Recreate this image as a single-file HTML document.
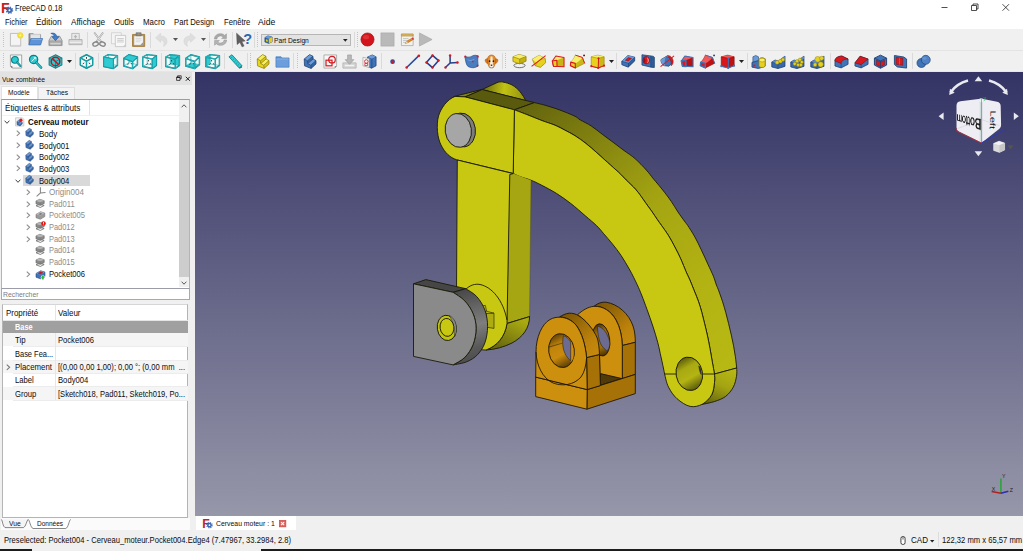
<!DOCTYPE html><html lang="fr"><head><meta charset="utf-8"><title>FreeCAD 0.18</title><style>
html,body{margin:0;padding:0}
body{width:1023px;height:551px;overflow:hidden;position:relative;background:#f0f0f0;font-family:"Liberation Sans", sans-serif;color:#0c0c0c}
.abs{position:absolute}
.tx{position:absolute;white-space:pre;line-height:12px;height:12px;transform-origin:0 50%;display:block}
svg{position:absolute;overflow:visible}
</style></head><body>
<div class="abs" id="titlebar" style="left:0;top:0;width:1023px;height:15px;background:#fff"></div>
<div class="abs" id="menubar" style="left:0;top:15px;width:1023px;height:14px;background:#fff"></div>
<div class="abs" id="toolbars" style="left:0;top:29px;width:1023px;height:43px;background:#f0f0f0"></div>
<div class="abs" style="left:0;top:50px;width:1023px;height:1px;background:#e3e3e3"></div>
<div class="abs" style="left:0;top:71px;width:1023px;height:1px;background:#e6e6e6"></div>
<div class="abs" id="view3d" style="left:195px;top:72px;width:828px;height:443.6px;background:linear-gradient(#333365,#9797aa)"></div>
<div class="abs" style="left:0;top:72px;width:192px;height:13px;background:#e2e2e2"></div>
<div class="abs" style="left:1px;top:85.6px;width:37.4px;height:13.4px;background:#fff;border:1px solid #e2e2e2;border-bottom:none;box-sizing:border-box"></div>
<div class="abs" style="left:38.4px;top:87.2px;width:36.6px;height:11.8px;background:#f4f4f4;border:1px solid #dedede;border-bottom:none;box-sizing:border-box"></div>
<div class="abs" id="tree" style="left:1px;top:99px;width:189px;height:189.8px;background:#fff;border:1px solid #b4b4b4;border-top-color:#9c9c9c;box-sizing:border-box"></div>
<div class="abs" style="left:89px;top:100px;width:1px;height:14.5px;background:#e2e2e2"></div>
<div class="abs" style="left:179.2px;top:100px;width:10px;height:187px;background:#f0f0f0"></div>
<div class="abs" style="left:179.2px;top:122px;width:10px;height:154.6px;background:#cdcdcd"></div>
<div class="abs" style="left:23.4px;top:174.7px;width:66.2px;height:11.2px;background:#d9d9d9"></div>
<div class="abs" style="left:1px;top:288.2px;width:189px;height:11.6px;background:#fff;border:1px solid #a9a9a9;border-top-color:#9a9ca8;box-sizing:border-box"></div>
<div class="abs" id="props" style="left:2px;top:303.6px;width:186.4px;height:214.2px;background:#fff;border:1px solid #b4b4b4;border-top-color:#d6d6d6;box-sizing:border-box"></div>
<div class="abs" style="left:3px;top:320.4px;width:185px;height:12.5px;background:#a0a0a0"></div>
<div class="abs" style="left:3px;top:333.0px;width:185px;height:13.4px;background:#f5f5f5"></div>
<div class="abs" style="left:3px;top:359.8px;width:185px;height:13.4px;background:#f5f5f5"></div>
<div class="abs" style="left:3px;top:386.6px;width:185px;height:13.4px;background:#f5f5f5"></div>
<div class="abs" style="left:13px;top:346.2px;width:175px;height:1px;background:#ececec"></div>
<div class="abs" style="left:13px;top:359.6px;width:175px;height:1px;background:#ececec"></div>
<div class="abs" style="left:13px;top:373.0px;width:175px;height:1px;background:#ececec"></div>
<div class="abs" style="left:13px;top:386.4px;width:175px;height:1px;background:#ececec"></div>
<div class="abs" style="left:13px;top:399.8px;width:175px;height:1px;background:#ececec"></div>
<div class="abs" style="left:54.6px;top:333px;width:1px;height:67px;background:#e6e6e6"></div>
<div class="abs" style="left:54.6px;top:304.6px;width:1px;height:15.6px;background:#e5e5e5"></div>
<div class="abs" style="left:3px;top:320px;width:185px;height:1px;background:#e5e5e5"></div>
<div class="abs" style="left:1px;top:518px;width:189px;height:11.6px;background:#fbfbfb"></div>
<svg style="left:0;top:517px" width="100" height="14" viewBox="0 0 100 14"><path d="M1.4 2.4C2.6 3.4 2.6 9.6 5 10.6L23.6 10.6C26 9.6 26.6 3.4 28.2 2.4" fill="#f4f4f4" stroke="#555" stroke-width="0.7"/><path d="M28.2 2.4C29.8 3.4 30.4 10.5 33 11.5L65.8 11.5C68.4 10.5 69 3.4 70.6 2.4" fill="#fff" stroke="#555" stroke-width="0.7"/></svg>
<div class="abs" style="left:195.6px;top:515.6px;width:100.6px;height:14.8px;background:#fff"></div>
<div class="abs" id="status" style="left:0;top:531px;width:1023px;height:17px;background:#f0f0f0"></div>
<div class="abs" style="left:0;top:549px;width:32px;height:2px;background:#1c1c1c"></div>
<div class="abs" style="left:261px;top:549px;width:762px;height:2px;background:#1c1c1c"></div>
<svg id="model" style="left:0;top:0" width="1023" height="551" viewBox="0 0 1023 551">
<defs>
<linearGradient id="gSide" gradientUnits="userSpaceOnUse" x1="530" y1="100" x2="735" y2="360"><stop offset="0" stop-color="#64640f"/><stop offset="0.1" stop-color="#72720f"/><stop offset="0.3" stop-color="#8e8e11"/><stop offset="0.48" stop-color="#a5a512"/><stop offset="0.75" stop-color="#b2b213"/><stop offset="1" stop-color="#b8b814"/></linearGradient>
<linearGradient id="gEnd" gradientUnits="userSpaceOnUse" x1="728" y1="368" x2="712" y2="406"><stop offset="0" stop-color="#b6b614"/><stop offset="0.45" stop-color="#a4a412"/><stop offset="1" stop-color="#64640e"/></linearGradient>
<linearGradient id="gBarEnd" gradientUnits="userSpaceOnUse" x1="520" y1="320" x2="505" y2="350"><stop offset="0" stop-color="#a9a912"/><stop offset="1" stop-color="#6a6a10"/></linearGradient>
<linearGradient id="gLugTop" gradientUnits="userSpaceOnUse" x1="455" y1="92" x2="526" y2="100"><stop offset="0" stop-color="#8c8c12"/><stop offset="0.42" stop-color="#74740f"/><stop offset="0.68" stop-color="#c2c214"/><stop offset="1" stop-color="#8e8e10"/></linearGradient>
<linearGradient id="gHole" gradientUnits="userSpaceOnUse" x1="684" y1="357" x2="696" y2="391"><stop offset="0" stop-color="#55550c"/><stop offset="0.3" stop-color="#a8a812"/><stop offset="0.6" stop-color="#b4b414"/><stop offset="1" stop-color="#4c4c0c"/></linearGradient>
<linearGradient id="gGray" gradientUnits="userSpaceOnUse" x1="462" y1="290" x2="482" y2="362"><stop offset="0" stop-color="#484848"/><stop offset="0.2" stop-color="#5e5e5e"/><stop offset="0.5" stop-color="#7e7e7e"/><stop offset="0.8" stop-color="#585858"/><stop offset="1" stop-color="#4a4a4a"/></linearGradient>
<linearGradient id="gOrTop1" gradientUnits="userSpaceOnUse" x1="563" y1="313" x2="597" y2="352"><stop offset="0" stop-color="#7a5405"/><stop offset="0.4" stop-color="#9e6d08"/><stop offset="0.75" stop-color="#bd820b"/><stop offset="1" stop-color="#c4880c"/></linearGradient>
<linearGradient id="gOrTop2" gradientUnits="userSpaceOnUse" x1="598" y1="302" x2="634" y2="340"><stop offset="0" stop-color="#7a5405"/><stop offset="0.4" stop-color="#9e6d08"/><stop offset="0.75" stop-color="#bd820b"/><stop offset="1" stop-color="#c4880c"/></linearGradient>
<linearGradient id="gOrHole" gradientUnits="userSpaceOnUse" x1="556" y1="334" x2="568" y2="368"><stop offset="0" stop-color="#5e3f05"/><stop offset="0.3" stop-color="#c0840c"/><stop offset="0.6" stop-color="#c98a0d"/><stop offset="1" stop-color="#4a3104"/></linearGradient>
<linearGradient id="gOrHole2" gradientUnits="userSpaceOnUse" x1="598" y1="324" x2="606" y2="356"><stop offset="0" stop-color="#4e3404"/><stop offset="0.25" stop-color="#9a6a08"/><stop offset="0.7" stop-color="#a06e09"/><stop offset="1" stop-color="#3e2a03"/></linearGradient>
</defs>
<g stroke="#1a1a08" stroke-width="0.9" stroke-linejoin="round">
<path d="M453.5 96.8 L457 95.7 L482.2 89.4 L496.9 82.7 C499 81.8 501 81.7 502.7 82 C506 82.6 509.5 83.6 512.1 85 C515.5 87 518.5 89.6 520.3 92 C522.6 95 524.4 97.8 525.8 100.6 L482.2 89.6 L465.2 96.9 Z" fill="url(#gLugTop)"/>
<path d="M465.2 96.9 L482.2 89.6 L534.4 102.6 L514.4 109.8 Z" fill="#5a5a0e"/>
<path d="M514.4 109.8 C516.7 110.7 523.4 113.2 528.0 115.0 C532.6 116.8 537.5 118.9 542.0 120.6 C546.5 122.3 551.2 123.6 555.0 125.2 C558.8 126.8 561.7 128.4 565.0 130.2 C568.3 131.9 571.5 133.5 575.0 135.7 C578.5 137.9 582.3 140.6 585.9 143.4 C589.5 146.2 593.2 149.5 596.8 152.7 C600.4 155.9 604.1 159.2 607.7 162.5 C611.3 165.8 615.5 169.4 618.6 172.3 C621.7 175.2 623.4 177.2 626.2 180.0 C629.0 182.8 633.0 186.4 635.4 189.1 C637.8 191.8 639.1 193.6 640.9 196.1 C642.7 198.6 644.5 201.2 646.3 203.8 C648.1 206.4 650.0 208.8 651.8 211.4 C653.6 214.0 655.6 217.0 657.2 219.4 C658.8 221.8 659.7 222.8 661.6 225.6 C663.5 228.3 666.4 232.2 668.7 235.9 C671.0 239.6 673.3 244.1 675.3 247.9 C677.3 251.7 678.9 254.8 680.7 258.8 C682.5 262.8 684.6 268.3 686.1 271.8 C687.6 275.3 688.5 276.8 689.9 280.0 C691.3 283.2 692.8 287.3 694.3 290.9 C695.8 294.5 697.3 298.2 698.6 301.8 C699.9 305.4 700.9 309.1 701.9 312.7 C702.9 316.3 703.7 319.9 704.6 323.6 C705.5 327.3 706.4 330.8 707.3 335.0 C708.2 339.2 709.2 344.2 710.0 348.6 C710.8 353.0 711.5 357.1 712.2 361.3 C713.0 365.5 714.1 371.9 714.5 374.0 L736.7 368.0 C736.5 366.1 735.9 360.5 735.4 356.8 C734.9 353.1 734.3 349.5 733.6 345.9 C732.9 342.3 732.1 338.7 731.3 335.0 C730.5 331.3 729.5 327.3 728.6 323.6 C727.7 319.9 726.8 316.3 725.8 312.7 C724.8 309.1 723.8 305.4 722.6 301.8 C721.4 298.2 719.8 293.7 718.8 290.9 C717.8 288.1 717.3 287.4 716.4 285.0 C715.5 282.6 714.8 279.7 713.4 276.2 C712.0 272.7 709.9 268.6 707.9 264.2 C705.9 259.8 703.6 254.6 701.4 250.1 C699.2 245.6 697.2 241.1 694.9 237.0 C692.6 232.9 689.5 228.2 687.8 225.6 C686.1 223.0 686.1 223.5 684.5 221.2 C682.9 218.9 680.1 215.2 677.9 211.9 C675.7 208.6 673.6 204.8 671.4 201.6 C669.2 198.4 667.0 195.5 664.9 192.8 C662.8 190.1 660.9 187.7 658.9 185.3 C656.9 182.9 655.0 180.8 652.9 178.2 C650.8 175.6 649.3 173.3 646.3 170.0 C643.3 166.7 638.7 161.8 635.0 158.6 C631.3 155.3 627.6 153.2 624.0 150.5 C620.4 147.8 616.7 145.0 613.1 142.3 C609.5 139.6 605.8 136.9 602.2 134.2 C598.6 131.5 594.9 128.4 591.3 126.0 C587.7 123.6 583.1 121.6 580.4 120.0 C577.7 118.4 577.6 117.6 575.0 116.3 C572.4 115.0 568.3 113.3 565.0 112.0 C561.7 110.7 558.3 109.4 555.0 108.3 C551.7 107.2 548.4 106.2 545.0 105.2 C541.6 104.2 536.2 103.0 534.4 102.6 Z" fill="url(#gSide)"/>
<path d="M714.5 374.0L736.7 368.0 C736.7 369.4 737.1 373.1 736.5 376.3 C735.9 379.5 735.1 383.8 733.3 387.1 C731.5 390.5 728.7 394.0 725.6 396.4 C722.5 398.8 718.6 400.1 714.8 401.4 C710.9 402.7 704.5 403.9 702.5 404.4 L702.5 404.1 C704.0 402.6 709.7 398.4 711.7 394.8 C713.7 391.2 714.0 386.0 714.5 382.5 C715.0 379.0 714.5 375.4 714.5 374.0 Z" fill="url(#gEnd)"/>
<path d="M514.4 109.8 C516.7 110.7 523.4 113.2 528.0 115.0 C532.6 116.8 537.5 118.9 542.0 120.6 C546.5 122.3 551.2 123.6 555.0 125.2 C558.8 126.8 561.7 128.4 565.0 130.2 C568.3 131.9 571.5 133.5 575.0 135.7 C578.5 137.9 582.3 140.6 585.9 143.4 C589.5 146.2 593.2 149.5 596.8 152.7 C600.4 155.9 604.1 159.2 607.7 162.5 C611.3 165.8 615.5 169.4 618.6 172.3 C621.7 175.2 623.4 177.2 626.2 180.0 C629.0 182.8 633.0 186.4 635.4 189.1 C637.8 191.8 639.1 193.6 640.9 196.1 C642.7 198.6 644.5 201.2 646.3 203.8 C648.1 206.4 650.0 208.8 651.8 211.4 C653.6 214.0 655.6 217.0 657.2 219.4 C658.8 221.8 659.7 222.8 661.6 225.6 C663.5 228.3 666.4 232.2 668.7 235.9 C671.0 239.6 673.3 244.1 675.3 247.9 C677.3 251.7 678.9 254.8 680.7 258.8 C682.5 262.8 684.6 268.3 686.1 271.8 C687.6 275.3 688.5 276.8 689.9 280.0 C691.3 283.2 692.8 287.3 694.3 290.9 C695.8 294.5 697.3 298.2 698.6 301.8 C699.9 305.4 700.9 309.1 701.9 312.7 C702.9 316.3 703.7 319.9 704.6 323.6 C705.5 327.3 706.4 330.8 707.3 335.0 C708.2 339.2 709.2 344.2 710.0 348.6 C710.8 353.0 711.5 357.1 712.2 361.3 C713.0 365.5 714.1 371.9 714.5 374.0 C714.5 375.4 715.0 379.0 714.5 382.5 C714.0 386.0 713.7 391.2 711.7 394.8 C709.7 398.4 706.1 402.2 702.5 404.1 C698.9 406.0 694.4 407.3 690.1 406.4 C685.9 405.5 680.6 401.9 677.0 398.7 C673.4 395.5 670.6 391.2 668.5 387.1 C666.4 383.0 665.2 376.2 664.6 374.0 C664.4 373.0 664.0 370.8 663.4 368.0 C662.8 365.2 662.0 361.3 661.0 357.0 C660.0 352.7 659.1 347.5 657.7 342.3 C656.3 337.1 654.6 331.4 652.8 326.0 C651.0 320.6 649.0 314.9 647.1 309.7 C645.2 304.5 643.3 299.2 641.6 295.0 C639.9 290.8 639.1 288.7 637.1 284.5 C635.1 280.3 632.5 274.8 629.8 270.0 C627.1 265.2 624.0 259.9 621.1 255.5 C618.2 251.2 615.3 247.5 612.4 243.9 C609.5 240.3 606.4 236.8 603.7 233.7 C601.1 230.6 599.6 228.6 596.5 225.6 C593.4 222.6 589.6 219.5 585.3 215.8 C581.0 212.1 575.6 207.2 570.8 203.5 C566.0 199.8 561.1 196.3 556.3 193.3 C551.5 190.3 546.0 187.5 541.8 185.3 C537.6 183.1 534.5 181.6 530.9 180.2 C527.3 178.8 523.0 177.7 520.0 176.6 C517.0 175.5 514.3 173.9 513.2 173.4 Z" fill="#c8c812"/>
<path d="M664.6 374 L676.5 374 M703 374 L714.5 374" fill="none"/>
<ellipse cx="689.3" cy="373.8" rx="13.2" ry="16.8" transform="rotate(-10 689.3 373.8)" fill="url(#gHole)"/>
<path d="M698.8 365.8 C700.8 368 701.6 371.5 701.2 374.6 C699.8 372.5 699 369 698.8 365.8 Z" fill="#33335a" stroke-width="0.4"/>
<path d="M465.2 96.9 L455 96.4 C447 99.5 441 108 438.5 116 C436 126 437.5 138 441 145 C445 153 450 157.5 456.7 159.8 L513.2 173.4 L514.4 109.8 Z" fill="#c8c812"/>
<path d="M509.8 173 L513.2 173.4 L531 180.2 L529.6 316.6 L507.4 323.3 Z" fill="#a6a612" stroke="none"/>
<path d="M529.6 316.6 L507.4 323.3" fill="none"/>
<path d="M531 180.2 L529.6 316.6" fill="none" stroke="#4a4a20" stroke-width="0.4"/>
<path d="M529.6 316.6 C529.4 328 523 337 512 343 C504 347 495 349.5 486 350 C497 346 505 337 507 323.5 Z" fill="url(#gBarEnd)"/>
<path d="M457.3 160 L513.2 173.6 L509.8 174.5 L507 323.5 C505 337 497 346 486 350 C470 350 458 340 456.3 325 Z" fill="#c8c812"/>
<path d="M465.3 289.8 C470 285 475 283.6 480 284.5 C492 287 503 300 507 320" fill="none"/>
<path d="M481.4 306 L485.4 305.4 L486.6 311.4 L482.4 312.2 Z" fill="#b6b612" stroke-width="0.6"/>
<path d="M482.4 312.2 L486.6 311.2 L494 313.2 L489.6 314.2 Z" fill="#c6c612" stroke-width="0.6"/>
<path d="M486.4 313.4 L494 313.2 L494 328.4 L486.4 327.2 Z" fill="#aeac10" stroke-width="0.6"/>
<path d="M413.5 283.8 L425.9 279.6 L465.8 288.7 L453.1 292.3 Z" fill="#464646"/>
<path d="M465.8 288.7 C467.6 290.0 473.5 292.9 476.7 296.5 C479.9 300.1 483.1 305.1 484.9 310.1 C486.7 315.1 487.6 320.9 487.6 326.4 C487.6 331.8 486.6 338.1 484.9 342.8 C483.2 347.5 480.6 351.4 477.6 354.6 C474.6 357.8 470.8 360.1 466.7 361.8 C462.6 363.5 455.4 364.4 453.1 364.9 L453.1 364.9 C455.1 363.6 461.6 360.7 464.9 357.3 C468.2 353.9 471.2 349.4 473.1 344.6 C475.0 339.8 476.1 333.5 476.1 328.3 C476.1 323.1 475.0 318.2 473.1 313.7 C471.2 309.1 468.2 304.6 464.9 301.0 C461.6 297.4 455.1 293.8 453.1 292.3 Z" fill="url(#gGray)"/>
<path d="M413.5 283.8 L453.1 292.3 C455.1 293.8 461.6 297.4 464.9 301.0 C468.2 304.6 471.2 309.1 473.1 313.7 C475.0 318.2 476.1 323.1 476.1 328.3 C476.1 333.5 475.0 339.8 473.1 344.6 C471.2 349.4 468.2 353.9 464.9 357.3 C461.6 360.7 455.1 363.6 453.1 364.9 L413.5 356.4 Z" fill="#8a8a8a"/>
<ellipse cx="446.8" cy="327.9" rx="9.5" ry="12.7" transform="rotate(-8 446.8 327.9)" fill="#c2c212"/>
<path d="M449.5 315.6 C453.5 317.5 456 322 456.4 327.5 C456.6 331 456 334 454.6 336.6 C454.4 329 453 321.5 449.5 315.6 Z" fill="#8a8a8a" stroke-width="0.4"/>
<ellipse cx="447" cy="327.4" rx="6.9" ry="9" transform="rotate(-8 447 327.4)" fill="#c8c812"/>
<ellipse cx="462.2" cy="130" rx="13.2" ry="17" transform="rotate(-8 462.2 130)" fill="#7c7c7c"/>
<ellipse cx="458.3" cy="130.4" rx="13.1" ry="17" transform="rotate(-8 458.3 130.4)" fill="#a6a6a6"/>
</g>
<g stroke="#1f1604" stroke-width="0.9" stroke-linejoin="round">
<path d="M594 306.3 C598 303 602 301.8 606 302.2 C618 304 629 314 633 326 C634.8 331 635.3 337 635.3 342.3 L622.3 345.5 C622 336 620 327 616 320 C611 311 603 306 594 306.3 Z" fill="url(#gOrTop2)"/>
<path d="M622.3 345.5 L635.3 342.3 L635.3 374.4 L622.3 378.6 Z" fill="#a67208"/>
<path d="M577.6 314.8 C582 310.6 588 306.8 594 306.3 C603 306 611 311 616 320 C620 327 622 336 622.3 345.5 L622.3 379 L600 384 L599.5 355 C598 340 592 324 577.6 314.8 Z" fill="#cd8f0e"/>
<ellipse cx="601.1" cy="339.9" rx="8.6" ry="16.2" transform="rotate(-7 601.1 339.9)" fill="url(#gOrHole2)"/>
<path d="M597.3 326.1 C599.5 326.6 601.5 327.8 603 329.1 C605 331 606.5 333.2 607.5 335.7 C608.6 337.6 609.4 339.8 609.7 342 C610 344.4 609.6 346.6 608.8 348.4 C608.4 349.4 607.8 350.3 606.9 350.9 C605 349.6 603.2 347.8 601.8 345.8 C600.2 343.2 599.2 340 598.6 336.9 C597.9 333.4 597.5 329.8 597.3 326.1 Z" fill="#6c6c93" stroke-width="0.5"/>
<path d="M600.4 373.6 L622 378.6 L600.4 385.2 Z" fill="#503a0a"/>
<path d="M587.2 389.6 L635.3 374.4 L635.3 393.6 L586.9 409.2 Z" fill="#a67208"/>
<path d="M535.7 377.1 L587.2 389.6 L586.9 409.2 L535.7 396.6 Z" fill="#cd8f0e"/>
<path d="M586.6 357.5 L599.5 354.5 L600.4 385.6 L587.2 389.6 Z" fill="#a67208"/>
<path d="M559.7 316.8 C562 315.4 565.5 313.6 569.1 313.2 C572.5 313 575.8 314 578.4 315.6 C582.5 318 586 321.5 589 325 C592.5 329.2 595.4 333.6 597.2 337.9 C598.6 342 599.2 348 599.5 354.5 L586.6 357.5 C585.4 345 582 333 576 325 C571.5 320 566 317.5 559.7 316.8 Z" fill="url(#gOrTop1)"/>
<path d="M536 352 C536 337 542 324 550 319.5 C553 317.8 557 317 560.3 317.2 C566 317.5 571.5 320 576 325 C582 333 585.4 345 586.6 357.5 L587.2 389.6 L535.7 377.1 Z" fill="#cd8f0e"/>
<path d="M536 352 C536.5 366 543 378 552 382.5 C562 387 574 385 581 377 C584.6 372 586.2 365 586.6 357.5" fill="none"/>
<ellipse cx="561.5" cy="350.6" rx="12.8" ry="17" transform="rotate(-8 561.5 350.6)" fill="url(#gOrHole)"/>
<path d="M570.7 341.5 C573.2 346 574.2 352 573.4 357.5 C572.8 359.5 572 361 570.7 362 Z" fill="#cf8f0e" stroke="none"/>
<path d="M563.4 335.7 C566.5 336.6 569 339 570.7 342 L570.7 360.6 C567.5 358.5 564.5 354 563.2 348 C562.4 344 562.6 339.5 563.4 335.7 Z" fill="#6c6c93" stroke-width="0.5"/>
<path d="M548.7 347.2 L562.4 343.1" fill="none" stroke-width="0.5"/>
</g>
<g>
<path d="M974.6 81.2L978.4 76.2L982.2 81.2Z" fill="#e9e9f0"/>
<path d="M974.6 151.2L978.4 156.2L982.2 151.2Z" fill="#e9e9f0"/>
<path d="M943.6 112.4L938.6 116.2L943.6 120Z" fill="#e9e9f0"/>
<path d="M1013.8 112.4L1018.8 116.2L1013.8 120Z" fill="#e9e9f0"/>
<path d="M950.5 92.5C955 86 961 82.5 968 80.6" fill="none" stroke="#e9e9f0" stroke-width="2.6"/><path d="M949.2 95L950 88.8L954.6 92.8Z" fill="#e9e9f0"/>
<path d="M1006.5 92.5C1002 86 996 82.5 989 80.6" fill="none" stroke="#e9e9f0" stroke-width="2.6"/><path d="M1007.8 95L1007 88.8L1002.4 92.8Z" fill="#e9e9f0"/>
<path d="M961 105.6L981.1 103.2L996.2 106.2L996.6 125.2L981.1 137.6L961 127.4Z" fill="#f7f7fb" stroke="#f7f7fb" stroke-width="9" stroke-linejoin="round" opacity="0.95"/>
<path d="M981.2 100V141.5" stroke="#dcdce8" stroke-width="3.4" opacity="0.8"/>
<circle cx="981.2" cy="100.6" r="2.2" fill="#fafafc" stroke="#d4d4e0" stroke-width="0.5"/>
<path d="M958 128.5L981 119.5L999.5 125.5" fill="none" stroke="#cfcfda" stroke-width="0.6"/>
<text transform="translate(990.4 110.6) rotate(92)" font-family="Liberation Sans, sans-serif" font-size="7.6" fill="#151515" textLength="18.4" lengthAdjust="spacingAndGlyphs">Left</text>
<path d="M981.4 98.4V143" stroke="#22c52a" stroke-width="0.8"/>
<path d="M956.4 131L981.4 143" stroke="#c92a2a" stroke-width="0.8"/>
<path d="M981.4 143L1003 130.6" stroke="#2a36c9" stroke-width="0.8"/>
<text x="983.6" y="100.4" font-family="Liberation Sans, sans-serif" font-size="5" fill="#22c52a">y</text>
<text x="1002.8" y="131.6" font-family="Liberation Sans, sans-serif" font-size="5.4" fill="#2a36c9">z</text>
<text x="955" y="131.2" font-family="Liberation Sans, sans-serif" font-size="4.6" fill="#c92a2a">x</text>
<path d="M993.6 143.4L999 141.2L1004.6 143V150L999.4 152.4L993.6 150.4Z" fill="#d9d9d9" stroke="#f5f5f5" stroke-width="0.5"/><path d="M993.6 143.4L999 141.2L1004.6 143L999.4 145.2Z" fill="#f2f2f2"/><path d="M999.4 145.2V152.4L1004.6 150V143Z" fill="#c6c6c6"/>
<path d="M1007.6 145.6H1013.6L1010.6 149.2Z" fill="#555"/>
<path d="M1000.9 478.4V493.2" stroke="#25a535" stroke-width="1.5"/>
<path d="M991.6 491.4L1000.9 493.2" stroke="#b51f1f" stroke-width="1.5"/>
<path d="M1000.9 493.2L1008.4 491.2" stroke="#2a2fb0" stroke-width="1.5"/>
<text x="1002" y="478.2" font-family="Liberation Sans, sans-serif" font-size="5.2" fill="#222">Y</text>
<text x="991.8" y="491" font-family="Liberation Sans, sans-serif" font-size="5.2" fill="#222">X</text>
<text x="1009.8" y="491.6" font-family="Liberation Sans, sans-serif" font-size="5.2" fill="#222">Z</text>
</g>
</svg>
<svg style="left:9.2px;top:32.4px" width="15.0" height="15.0" viewBox="0 0 16 16"><path d="M1.5 1.5H12.5V15H1.5Z" fill="#f4f4f4" stroke="#b5b5b5" stroke-width="0.9"/><path d="M2.5 14.3H12" stroke="#d0d0d0" stroke-width="0.8"/><circle cx="12" cy="3.6" r="3" fill="#f4e23a" stroke="#e9d420" stroke-width="0.6"/><circle cx="12" cy="3.6" r="1" fill="#fbf6a8"/></svg>
<svg style="left:28.3px;top:32.4px" width="15.0" height="15.0" viewBox="0 0 16 16"><path d="M1 1.8H5.6L6.6 2.8H13.4V12.6H1Z" fill="#8e8e8e" stroke="#747474" stroke-width="0.7"/><path d="M2.6 2.4H13V10H2.6Z" fill="#f0f0f0" stroke="#b4b4b4" stroke-width="0.5"/><path d="M3.4 4H12.2M3.4 5.4H12.2" stroke="#cfcfcf" stroke-width="0.6"/><path d="M3 7H15.6L13.4 13.8H0.8Z" fill="#5e93d8" stroke="#3c70b2" stroke-width="0.8"/><path d="M3.6 7.8H14.6" stroke="#9cc0ee" stroke-width="0.8"/></svg>
<svg style="left:48.0px;top:32.4px" width="15.0" height="15.0" viewBox="0 0 16 16"><path d="M1 9L3.5 4.5H12.5L15 9V14.5H1Z" fill="#c9c9c9" stroke="#8a8a8a" stroke-width="0.8"/><path d="M1.5 9.5H14.5V14H1.5Z" fill="#b0b0b0" stroke="#8a8a8a" stroke-width="0.6"/><path d="M2.5 12.6H13.5" stroke="#e8e8e8" stroke-width="0.9"/><path d="M3 1.5C6.5 0.5 9 2 9.2 5H11.8L8 9.2L4.2 5H6.6C6.5 3 5 1.8 3 1.5Z" fill="#3f7fd0" stroke="#2a5a9c" stroke-width="0.7"/></svg>
<svg style="left:68.0px;top:32.4px" width="15.0" height="15.0" viewBox="0 0 16 16"><path d="M4 1.5H12V8H4Z" fill="#e9e9e9" stroke="#ababab" stroke-width="0.8"/><path d="M8 3L10 5.3H8.8V7H7.2V5.3H6Z" fill="#b5b5b5"/><path d="M1 8H15V13.5H1Z" fill="#d6d6d6" stroke="#a5a5a5" stroke-width="0.8"/><path d="M1.5 11H14.5" stroke="#f5f5f5" stroke-width="1"/><path d="M1.5 13H14.5" stroke="#bcbcbc" stroke-width="0.8"/></svg>
<svg style="left:91.5px;top:32.4px" width="15.0" height="15.0" viewBox="0 0 16 16"><path d="M2.4 0.6L10.6 11.4M11.8 0.6L4 11.4" stroke="#9c9c9c" stroke-width="1.9" fill="none"/><path d="M2.4 0.6L10.6 11.4M11.8 0.6L4 11.4" stroke="#ececec" stroke-width="0.9" fill="none"/><ellipse cx="3.8" cy="12.8" rx="3" ry="2.2" fill="none" stroke="#848484" stroke-width="1.4" transform="rotate(-20 3.8 12.8)"/><ellipse cx="11.2" cy="12.8" rx="3" ry="2.2" fill="none" stroke="#848484" stroke-width="1.4" transform="rotate(20 11.2 12.8)"/></svg>
<svg style="left:110.5px;top:32.4px" width="15.0" height="15.0" viewBox="0 0 16 16"><path d="M0.5 0.8H11V12.6H0.5Z" fill="#f4f4f4" stroke="#cbcbcb" stroke-width="0.8"/><path d="M4.6 3.6H15.6V15.6H4.6Z" fill="#f7f7f7" stroke="#bdbdbd" stroke-width="0.8"/><path d="M6.6 7H13.6M6.6 8.8H13.6M6.6 10.6H13.6" stroke="#c2c2c2" stroke-width="0.9"/><path d="M12.6 15.6L15.6 12.8V15.6Z" fill="#c8c8c8"/></svg>
<svg style="left:131.0px;top:32.4px" width="15.0" height="15.0" viewBox="0 0 16 16"><path d="M1.6 2.6H14.6V15.4H1.6Z" fill="#b48e4a" stroke="#a07a36" stroke-width="0.9"/><path d="M3.4 4.4H12.8V13.8H3.4Z" fill="#f3f3f3" stroke="#dcdcdc" stroke-width="0.4"/><path d="M5.4 0.8H10.8V4H5.4Z" fill="#8a8a8a" stroke="#6a6a6a" stroke-width="0.6"/><path d="M7.2 2.2H9" stroke="#d89a4a" stroke-width="0.8"/><path d="M5 6.8H11.2M5 8.6H11.2M5 10.4H9.6" stroke="#cfcfcf" stroke-width="0.8"/><path d="M10 13.8L12.8 11V13.8Z" fill="#9a9a9a"/></svg>
<svg style="left:153.5px;top:32.4px" width="15.0" height="15.0" viewBox="0 0 16 16"><path d="M1.6 6.2L7 1.4V4.2C11.8 4.2 14.4 7 13.8 11.2C13.4 13.2 11.8 14.6 10 15.2C11.4 12.6 10.8 8.8 7 8.5V11Z" fill="#dedede" stroke="#d4d4d4" stroke-width="0.6"/></svg>
<svg style="left:182.0px;top:32.4px" width="15.0" height="15.0" viewBox="0 0 16 16"><path d="M14.4 6.2L9 1.4V4.2C4.2 4.2 1.6 7 2.2 11.2C2.6 13.2 4.2 14.6 6 15.2C4.6 12.6 5.2 8.8 9 8.5V11Z" fill="#dedede" stroke="#d4d4d4" stroke-width="0.6"/></svg>
<svg style="left:212.8px;top:32.4px" width="15.0" height="15.0" viewBox="0 0 16 16"><path d="M1.5 7.5C1.5 4 4.5 1.8 8 1.8C10 1.8 11.5 2.5 12.5 3.6L14.3 1.8V7H9.2L11 5.2C10.2 4.5 9.2 4.2 8 4.2C5.8 4.2 4.3 5.6 4.2 7.5Z" fill="#a9a9a9" stroke="#8e8e8e" stroke-width="0.5"/><path d="M14.5 8.5C14.5 12 11.5 14.2 8 14.2C6 14.2 4.5 13.5 3.5 12.4L1.7 14.2V9H6.8L5 10.8C5.8 11.5 6.8 11.8 8 11.8C10.2 11.8 11.7 10.4 11.8 8.5Z" fill="#b4b4b4" stroke="#8e8e8e" stroke-width="0.5"/></svg>
<svg style="left:236.0px;top:32.4px" width="15.0" height="15.0" viewBox="0 0 16 16"><path d="M0.6 1.2L9.8 9.6L6.2 10.2L8.6 15L6.4 15.8L4.2 11L1.2 13.4Z" fill="#606060" stroke="#4a4a4a" stroke-width="0.5"/><text x="7.6" y="12.6" font-family="Liberation Sans, sans-serif" font-weight="bold" font-size="15.5" fill="#2f66ad">?</text></svg>
<svg style="left:360.0px;top:32.4px" width="15.0" height="15.0" viewBox="0 0 16 16"><circle cx="8" cy="8" r="7" fill="#d4141c" stroke="#a20d12" stroke-width="0.7"/><ellipse cx="6.5" cy="5.5" rx="3.2" ry="2.2" fill="#e14a4f" opacity="0.55"/></svg>
<svg style="left:380.0px;top:32.4px" width="15.0" height="15.0" viewBox="0 0 16 16"><rect x="1" y="1" width="14" height="14" fill="#b9b9b9" stroke="#a9a9a9" stroke-width="0.7"/></svg>
<svg style="left:399.8px;top:32.4px" width="15.0" height="15.0" viewBox="0 0 16 16"><path d="M1.5 2.5H14V14.5H1.5Z" fill="#f1f1ee" stroke="#a6a6a6" stroke-width="0.8"/><path d="M1.5 2H14V4.4H1.5Z" fill="#d9b25a" stroke="#a98a3a" stroke-width="0.5"/><path d="M3.2 7H9M3.2 9H7.5M3.2 11H6.5" stroke="#b9b9b9" stroke-width="0.8"/><path d="M5.5 12.2L7.3 9.6L13.8 6L14.8 7.6L8.4 11.4Z" fill="#e68a1e" stroke="#a85a0a" stroke-width="0.5"/><path d="M5.5 12.2L7.3 9.6L8.4 11.4Z" fill="#f1d9a8"/><path d="M13 6.4L14 8" stroke="#d23030" stroke-width="1.2"/></svg>
<svg style="left:418.4px;top:32.4px" width="15.0" height="15.0" viewBox="0 0 16 16"><path d="M1.5 1L15 8L1.5 15Z" fill="#b9b9b9" stroke="#a5a5a5" stroke-width="0.7"/></svg>
<svg style="left:9.3px;top:53.6px" width="15.0" height="15.0" viewBox="0 0 16 16"><path d="M1.5 1H13.5V15H3.5L1.5 13Z" fill="#f6f6f6" stroke="#8e8e8e" stroke-width="0.8"/><path d="M1.5 13H3.5V15Z" fill="#555"/><circle cx="6.3" cy="6.2" r="3.6" fill="#2ecbd2" stroke="#0b7f86" stroke-width="1.2"/><path d="M8.6 8.8L12.2 12.8" stroke="#0b7f86" stroke-width="2.2" stroke-linecap="round"/><path d="M8.6 8.8L12.2 12.8" stroke="#2ecbd2" stroke-width="1" stroke-linecap="round"/></svg>
<svg style="left:28.3px;top:53.6px" width="15.0" height="15.0" viewBox="0 0 16 16"><circle cx="6" cy="5.8" r="4.4" fill="#2ecbd2" stroke="#0b7f86" stroke-width="1.3"/><path d="M3.8 8L8.3 3.5M8.3 3.5H6.2M8.3 3.5V5.6" stroke="#e9f9fa" stroke-width="1" fill="none"/><path d="M9 9.2L14 14.6" stroke="#0b7f86" stroke-width="2.6" stroke-linecap="round"/><path d="M9 9.2L14 14.6" stroke="#2ecbd2" stroke-width="1.2" stroke-linecap="round"/></svg>
<svg style="left:48.0px;top:53.6px" width="15.0" height="15.0" viewBox="0 0 16 16"><path d="M8 0.8L14.8 4.4V11.6L8 15.2L1.2 11.6V4.4Z" fill="#2ecbd2" stroke="#0b7f86" stroke-width="1.1"/><path d="M1.2 4.4L8 8L14.8 4.4M8 8V15.2" stroke="#0b7f86" stroke-width="0.8" fill="none"/><circle cx="8" cy="8" r="4.6" fill="none" stroke="#c8141c" stroke-width="1.6"/><path d="M4.8 4.8L11.2 11.2" stroke="#c8141c" stroke-width="1.6"/></svg>
<svg style="left:79.4px;top:53.6px" width="15.0" height="15.0" viewBox="0 0 16 16"><path d="M8 0.8L14.6 4.2V11.8L8 15.2L1.4 11.8V4.2Z" fill="#f4fbfb" stroke="#0b7f86" stroke-width="1.5" stroke-linejoin="round"/><path d="M1.4 4.2L8 7.6L14.6 4.2M8 7.6V15.2" stroke="#0b7f86" stroke-width="1.5" fill="none"/><path d="M8 0.8L14.6 4.2V11.8L8 15.2L1.4 11.8V4.2ZM1.4 4.2L8 7.6L14.6 4.2M8 7.6V15.2" stroke="#2ecbd2" stroke-width="0.5" fill="none"/><path d="M8 3.2v2M4 10.5l1.6-1M12 10.5l-1.6-1" stroke="#222" stroke-width="0.9"/></svg>
<svg style="left:102.6px;top:53.6px" width="15.0" height="15.0" viewBox="0 0 16 16"><path d="M0.8 3.2 L5.6 0.7 L15.4 1.9 L15.4 12.2 L11.0 15.4 L0.8 13.3 Z" fill="#f3fbfb"/><path d="M5.6 0.7L5.6 10.6L15.4 12.2M5.6 10.6L0.8 13.3" fill="none" stroke="#3fb3b9" stroke-width="0.8"/><path d="M7 6.4v1.5M6.2 10.2l-1.5 1.1M8.6 10.2l1.3 0.6" stroke="#2a2a2a" stroke-width="0.9" fill="none"/><path d="M0.8 3.2 L11.0 5.4 L11.0 15.4 L0.8 13.3 Z" fill="#2ecbd2"/><path d="M0.8 3.2L11.0 5.4L11.0 15.4L0.8 13.3ZM0.8 3.2L5.6 0.7L15.4 1.9L11.0 5.4M15.4 1.9L15.4 12.2L11.0 15.4" fill="none" stroke="#0b7f86" stroke-width="1.5" stroke-linejoin="round"/><path d="M0.8 3.2L11.0 5.4L11.0 15.4L0.8 13.3ZM0.8 3.2L5.6 0.7L15.4 1.9L11.0 5.4M15.4 1.9L15.4 12.2L11.0 15.4" fill="none" stroke="#2ecbd2" stroke-width="0.7" stroke-linejoin="round"/><path d="M0.8 3.2 L11.0 5.4 L11.0 15.4 L0.8 13.3 Z" fill="#2ecbd2" stroke="#0b7f86" stroke-width="0.5"/></svg>
<svg style="left:122.6px;top:53.6px" width="15.0" height="15.0" viewBox="0 0 16 16"><path d="M0.8 4.6 L6.2 0.8 L15.4 3.2 L15.4 11.4 L10.2 15.6 L0.8 12.8 Z" fill="#f3fbfb"/><path d="M6.2 0.8L6.2 9.2L15.4 11.4M6.2 9.2L0.8 12.8" fill="none" stroke="#3fb3b9" stroke-width="0.8"/><path d="M7 6.4v1.5M6.2 10.2l-1.5 1.1M8.6 10.2l1.3 0.6" stroke="#2a2a2a" stroke-width="0.9" fill="none"/><path d="M0.8 4.6 L10.2 8.0 L15.4 3.2 L6.2 0.8 Z" fill="#2ecbd2"/><path d="M0.8 4.6L10.2 8.0L10.2 15.6L0.8 12.8ZM0.8 4.6L6.2 0.8L15.4 3.2L10.2 8.0M15.4 3.2L15.4 11.4L10.2 15.6" fill="none" stroke="#0b7f86" stroke-width="1.5" stroke-linejoin="round"/><path d="M0.8 4.6L10.2 8.0L10.2 15.6L0.8 12.8ZM0.8 4.6L6.2 0.8L15.4 3.2L10.2 8.0M15.4 3.2L15.4 11.4L10.2 15.6" fill="none" stroke="#2ecbd2" stroke-width="0.7" stroke-linejoin="round"/><path d="M0.8 4.6 L10.2 8.0 L15.4 3.2 L6.2 0.8 Z" fill="#2ecbd2" stroke="#0b7f86" stroke-width="0.5"/></svg>
<svg style="left:142.3px;top:53.6px" width="15.0" height="15.0" viewBox="0 0 16 16"><path d="M0.8 3.2 L5.6 0.7 L15.4 1.9 L15.4 12.2 L11.0 15.4 L0.8 13.3 Z" fill="#f3fbfb"/><path d="M5.6 0.7L5.6 10.6L15.4 12.2M5.6 10.6L0.8 13.3" fill="none" stroke="#3fb3b9" stroke-width="0.8"/><path d="M7 6.4v1.5M6.2 10.2l-1.5 1.1M8.6 10.2l1.3 0.6" stroke="#2a2a2a" stroke-width="0.9" fill="none"/><path d="M11.0 5.4 L15.4 1.9 L15.4 12.2 L11.0 15.4 Z" fill="#2ecbd2"/><path d="M0.8 3.2L11.0 5.4L11.0 15.4L0.8 13.3ZM0.8 3.2L5.6 0.7L15.4 1.9L11.0 5.4M15.4 1.9L15.4 12.2L11.0 15.4" fill="none" stroke="#0b7f86" stroke-width="1.5" stroke-linejoin="round"/><path d="M0.8 3.2L11.0 5.4L11.0 15.4L0.8 13.3ZM0.8 3.2L5.6 0.7L15.4 1.9L11.0 5.4M15.4 1.9L15.4 12.2L11.0 15.4" fill="none" stroke="#2ecbd2" stroke-width="0.7" stroke-linejoin="round"/><path d="M11.0 5.4 L15.4 1.9 L15.4 12.2 L11.0 15.4 Z" fill="#2ecbd2" stroke="#0b7f86" stroke-width="0.5"/></svg>
<svg style="left:165.3px;top:53.6px" width="15.0" height="15.0" viewBox="0 0 16 16"><path d="M0.8 3.2 L5.6 0.7 L15.4 1.9 L15.4 12.2 L11.0 15.4 L0.8 13.3 Z" fill="#f3fbfb"/><path d="M5.6 0.7 L15.4 1.9 L15.4 12.2 L5.6 10.6 Z" fill="#2ecbd2"/><path d="M5.6 0.7L5.6 10.6L15.4 12.2M5.6 10.6L0.8 13.3" fill="none" stroke="#3fb3b9" stroke-width="0.8"/><path d="M7 6.4v1.5M6.2 10.2l-1.5 1.1M8.6 10.2l1.3 0.6" stroke="#2a2a2a" stroke-width="0.9" fill="none"/><path d="M0.8 3.2L11.0 5.4L11.0 15.4L0.8 13.3ZM0.8 3.2L5.6 0.7L15.4 1.9L11.0 5.4M15.4 1.9L15.4 12.2L11.0 15.4" fill="none" stroke="#0b7f86" stroke-width="1.5" stroke-linejoin="round"/><path d="M0.8 3.2L11.0 5.4L11.0 15.4L0.8 13.3ZM0.8 3.2L5.6 0.7L15.4 1.9L11.0 5.4M15.4 1.9L15.4 12.2L11.0 15.4" fill="none" stroke="#2ecbd2" stroke-width="0.7" stroke-linejoin="round"/></svg>
<svg style="left:185.2px;top:53.6px" width="15.0" height="15.0" viewBox="0 0 16 16"><path d="M0.8 4.6 L6.2 0.8 L15.4 3.2 L15.4 11.4 L10.2 15.6 L0.8 12.8 Z" fill="#f3fbfb"/><path d="M0.8 12.8 L10.2 15.6 L15.4 11.4 L6.2 9.2 Z" fill="#2ecbd2"/><path d="M6.2 0.8L6.2 9.2L15.4 11.4M6.2 9.2L0.8 12.8" fill="none" stroke="#3fb3b9" stroke-width="0.8"/><path d="M7 6.4v1.5M6.2 10.2l-1.5 1.1M8.6 10.2l1.3 0.6" stroke="#2a2a2a" stroke-width="0.9" fill="none"/><path d="M0.8 4.6L10.2 8.0L10.2 15.6L0.8 12.8ZM0.8 4.6L6.2 0.8L15.4 3.2L10.2 8.0M15.4 3.2L15.4 11.4L10.2 15.6" fill="none" stroke="#0b7f86" stroke-width="1.5" stroke-linejoin="round"/><path d="M0.8 4.6L10.2 8.0L10.2 15.6L0.8 12.8ZM0.8 4.6L6.2 0.8L15.4 3.2L10.2 8.0M15.4 3.2L15.4 11.4L10.2 15.6" fill="none" stroke="#2ecbd2" stroke-width="0.7" stroke-linejoin="round"/></svg>
<svg style="left:204.9px;top:53.6px" width="15.0" height="15.0" viewBox="0 0 16 16"><path d="M0.8 3.2 L5.6 0.7 L15.4 1.9 L15.4 12.2 L11.0 15.4 L0.8 13.3 Z" fill="#f3fbfb"/><path d="M0.8 3.2 L5.6 0.7 L5.6 10.6 L0.8 13.3 Z" fill="#2ecbd2"/><path d="M5.6 0.7L5.6 10.6L15.4 12.2M5.6 10.6L0.8 13.3" fill="none" stroke="#3fb3b9" stroke-width="0.8"/><path d="M7 6.4v1.5M6.2 10.2l-1.5 1.1M8.6 10.2l1.3 0.6" stroke="#2a2a2a" stroke-width="0.9" fill="none"/><path d="M0.8 3.2L11.0 5.4L11.0 15.4L0.8 13.3ZM0.8 3.2L5.6 0.7L15.4 1.9L11.0 5.4M15.4 1.9L15.4 12.2L11.0 15.4" fill="none" stroke="#0b7f86" stroke-width="1.5" stroke-linejoin="round"/><path d="M0.8 3.2L11.0 5.4L11.0 15.4L0.8 13.3ZM0.8 3.2L5.6 0.7L15.4 1.9L11.0 5.4M15.4 1.9L15.4 12.2L11.0 15.4" fill="none" stroke="#2ecbd2" stroke-width="0.7" stroke-linejoin="round"/></svg>
<svg style="left:227.9px;top:53.6px" width="15.0" height="15.0" viewBox="0 0 16 16"><path d="M1 3L4.2 0.8L15 12.6L11.8 14.8Z" fill="#2ecbd2" stroke="#0b7f86" stroke-width="0.9"/><path d="M4.6 3.2l-1.3 0.9M6.4 5.2l-1.3 0.9M8.2 7.2l-1.3 0.9M10 9.2l-1.3 0.9M11.8 11.2l-1.3 0.9" stroke="#0b7f86" stroke-width="0.6"/><path d="M11.8 14.8L15 12.6V14.5L12.2 15.8Z" fill="#0b7f86"/></svg>
<svg style="left:256.0px;top:53.6px" width="15.0" height="15.0" viewBox="0 0 16 16"><path d="M1.3 5.3 L4.8 7.2 L5.0 10.2 L8.3 12.0 L8.6 15.4 L1.6 12.6Z" fill="#e8d81c"/><path d="M7.1 0.6 L10.6 2.4 L4.8 7.2 L1.3 5.3Z" fill="#f6ee5a"/><path d="M5.0 10.2 L10.8 5.3 L13.8 7.0 L8.3 12.0Z" fill="#f6ee5a"/><path d="M4.8 7.2 L10.6 2.4 L10.8 5.3 L5.0 10.2Z" fill="#d8c414"/><path d="M8.3 12.0 L13.8 7.0 L13.9 10.6 L8.6 15.4Z" fill="#d8c414"/><path d="M7.1 0.6 L10.6 2.4 L10.8 5.3 L13.8 7.0 L13.9 10.6 L8.6 15.4 L1.6 12.6 L1.3 5.3Z M4.8 7.2L10.6 2.4M5 10.2L10.8 5.3M4.8 7.2L5 10.2L8.3 12L13.8 7M8.3 12L8.6 15.4M1.3 5.3L4.8 7.2" fill="none" stroke="#8f7d05" stroke-width="0.8" stroke-linejoin="round"/></svg>
<svg style="left:275.4px;top:53.6px" width="15.0" height="15.0" viewBox="0 0 16 16"><path d="M1 3H6.5L7.5 4.2H15V14H1Z" fill="#5a8fd4" stroke="#4577b8" stroke-width="0.7"/><path d="M1.5 5.5H14.5V13.5H1.5Z" fill="#6d9edc"/><path d="M1.5 5.3H14.5" stroke="#a5c6ef" stroke-width="0.7"/></svg>
<svg style="left:302.8px;top:53.6px" width="15.0" height="15.0" viewBox="0 0 16 16"><path d="M1.3 5.3 L4.8 7.2 L5.0 10.2 L8.3 12.0 L8.6 15.4 L1.6 12.6Z" fill="#3f74b8"/><path d="M7.1 0.6 L10.6 2.4 L4.8 7.2 L1.3 5.3Z" fill="#6b9cd9"/><path d="M5.0 10.2 L10.8 5.3 L13.8 7.0 L8.3 12.0Z" fill="#6b9cd9"/><path d="M4.8 7.2 L10.6 2.4 L10.8 5.3 L5.0 10.2Z" fill="#3466a8"/><path d="M8.3 12.0 L13.8 7.0 L13.9 10.6 L8.6 15.4Z" fill="#3466a8"/><path d="M7.1 0.6 L10.6 2.4 L10.8 5.3 L13.8 7.0 L13.9 10.6 L8.6 15.4 L1.6 12.6 L1.3 5.3Z M4.8 7.2L10.6 2.4M5 10.2L10.8 5.3M4.8 7.2L5 10.2L8.3 12L13.8 7M8.3 12L8.6 15.4M1.3 5.3L4.8 7.2" fill="none" stroke="#1d3f70" stroke-width="0.8" stroke-linejoin="round"/></svg>
<svg style="left:322.6px;top:53.6px" width="15.0" height="15.0" viewBox="0 0 16 16"><path d="M1 1H14.5V13L12.5 15H1Z" fill="#f7f7f7" stroke="#9b9b9b" stroke-width="0.8"/><path d="M12.5 15V13H14.5Z" fill="#666"/><rect x="3.2" y="6.6" width="6.4" height="6" fill="none" stroke="#d81a20" stroke-width="1.3"/><circle cx="9.6" cy="6" r="3.5" fill="none" stroke="#d81a20" stroke-width="1.3"/></svg>
<svg style="left:342.2px;top:53.6px" width="15.0" height="15.0" viewBox="0 0 16 16"><path d="M1 9.5H15V15H1Z" fill="#dcdcdc" stroke="#a9a9a9" stroke-width="0.8"/><path d="M2.5 11H13.5V13.6H2.5Z" fill="#f2f2f2" stroke="#bdbdbd" stroke-width="0.5"/><path d="M6 1H10V6H12.6L8 11L3.4 6H6Z" fill="#b8b8b8" stroke="#9a9a9a" stroke-width="0.7"/></svg>
<svg style="left:361.6px;top:53.6px" width="15.0" height="15.0" viewBox="0 0 16 16"><path d="M6 3.2L11 1L15 3V12.6L10 15.2L6 13Z" fill="#3f74b8" stroke="#1d3f70" stroke-width="0.8" stroke-linejoin="round"/><path d="M6 3.2L10.5 5L15 3M10.5 5V15" stroke="#1d3f70" stroke-width="0.7" fill="none"/><path d="M6 3.2L11 1L15 3L10.5 5Z" fill="#6a9bd8"/><path d="M1 3.5L7.6 5V14.5L1 12.6Z" fill="#f7f7f7" stroke="#9b9b9b" stroke-width="0.7"/><circle cx="4.6" cy="8" r="1.9" fill="none" stroke="#d81a20" stroke-width="0.9"/><path d="M3 10h3v2.4h-3z" fill="none" stroke="#d81a20" stroke-width="0.8"/></svg>
<svg style="left:385.0px;top:53.6px" width="15.0" height="15.0" viewBox="0 0 16 16"><circle cx="8.1" cy="8.2" r="2.5" fill="#2a4a9f"/><circle cx="8.1" cy="8.2" r="1.4" fill="#d81a20"/></svg>
<svg style="left:404.8px;top:53.6px" width="15.0" height="15.0" viewBox="0 0 16 16"><path d="M1.8 14.4L14.8 1.8" stroke="#2a4a9f" stroke-width="1.7"/><circle cx="1.8" cy="14.4" r="1.4" fill="#d81a20"/><circle cx="14.8" cy="1.8" r="1.4" fill="#d81a20"/></svg>
<svg style="left:424.6px;top:53.6px" width="15.0" height="15.0" viewBox="0 0 16 16"><path d="M1.5 9L8 1.5L14.5 7L8 14.5Z" fill="none" stroke="#24408e" stroke-width="1.7" stroke-linejoin="round"/><circle cx="1.6" cy="9" r="1.3" fill="#d81a20"/><circle cx="8" cy="1.6" r="1.3" fill="#d81a20"/><circle cx="14.4" cy="7" r="1.3" fill="#d81a20"/><circle cx="8" cy="14.4" r="1.3" fill="#d81a20"/></svg>
<svg style="left:444.0px;top:53.6px" width="15.0" height="15.0" viewBox="0 0 16 16"><path d="M6.5 1.5V9.5L1.5 14.5M6.5 9.5L14.5 9" stroke="#24408e" stroke-width="1.6" fill="none" stroke-linejoin="round"/><circle cx="6.5" cy="1.6" r="1.3" fill="#d81a20"/><circle cx="1.6" cy="14.4" r="1.3" fill="#d81a20"/><circle cx="14.4" cy="9" r="1.3" fill="#d81a20"/></svg>
<svg style="left:463.8px;top:53.6px" width="15.0" height="15.0" viewBox="0 0 16 16"><path d="M1 2.5C4 4 7 3.5 9 2C11 1 14 1 15.2 2.8C14 6 15 9 15 12.5C12 15.5 7 15 4 13C2 11 1.5 6 1 2.5Z" fill="#4a7cc0" stroke="#2b5797" stroke-width="0.8"/><path d="M4 6C6 7.5 9 7 11 5.5" stroke="#76a3de" stroke-width="1" fill="none"/><circle cx="1.4" cy="2.8" r="1.1" fill="#d81a20"/><circle cx="14.6" cy="2.4" r="1.1" fill="#d81a20"/><circle cx="14.4" cy="12.6" r="1.1" fill="#d81a20"/><circle cx="9.4" cy="8" r="0.9" fill="#d81a20"/></svg>
<svg style="left:484.0px;top:53.6px" width="15.0" height="15.0" viewBox="0 0 16 16"><path d="M1 6.5C2 4.6 4 4.6 5 6L4.6 10C3.4 10.8 1.6 9.6 1 6.5Z" fill="#d9761c" stroke="#9a4e0c" stroke-width="0.4"/><path d="M15 6.5C14 4.6 12 4.6 11 6L11.4 10C12.6 10.8 14.4 9.6 15 6.5Z" fill="#d9761c" stroke="#9a4e0c" stroke-width="0.4"/><path d="M3.6 6C3.6 3 5.6 1 8 1C10.4 1 12.4 3 12.4 6C12.4 9 11.6 12 10.4 14C9.6 15.3 6.4 15.3 5.6 14C4.4 12 3.6 9 3.6 6Z" fill="#e58a24" stroke="#9a4e0c" stroke-width="0.5"/><path d="M7 2.6H9L9.6 11.5H6.4Z" fill="#f6efe6"/><ellipse cx="8" cy="12.6" rx="2.2" ry="1.8" fill="#f6efe6"/><circle cx="5.9" cy="7.6" r="0.9" fill="#1a1a1a"/><circle cx="10.1" cy="7.6" r="0.9" fill="#1a1a1a"/><ellipse cx="8" cy="12" rx="1" ry="0.7" fill="#2a2a2a"/></svg>
<svg style="left:511.6px;top:53.6px" width="15.0" height="15.0" viewBox="0 0 16 16"><path d="M2 12.2C2 10.8 5 10 8 10C11 10 14 10.8 14 12.2C14 13.6 11 14.6 8 14.6C5 14.6 2 13.6 2 12.2Z" fill="none" stroke="#555" stroke-width="0.9"/><g transform="translate(0,-1.6) scale(1,0.92)"><path d="M1 5L7.5 2.2L15 4.6V10L8.2 13.2L1 10.4Z" fill="#e6d21e" stroke="#8f7d05" stroke-width="0.8" stroke-linejoin="round"/><path d="M1 5L7.5 2.2L15 4.6L8.2 7.6Z" fill="#f7ee6a"/><path d="M8.2 7.6V13.2L15 10V4.6Z" fill="#8f7d05" opacity="0.4"/><path d="M1 5L8.2 7.6L15 4.6M8.2 7.6V13.2" stroke="#8f7d05" stroke-width="0.7" fill="none"/></g></svg>
<svg style="left:530.8px;top:53.6px" width="15.0" height="15.0" viewBox="0 0 16 16"><path d="M1.3 5.5L8.8 1.4L15.2 4.9L15.6 9.3L10 14.3L4.4 12.4Z" fill="#e6d21e" stroke="#8f7d05" stroke-width="0.7" stroke-linejoin="round"/><path d="M1.3 5.5L8.8 1.4L15.2 4.9C11 5 8 7 6.6 9.6Z" fill="#f7ee6a"/><path d="M6.6 9.6C8 7 11 5 15.2 4.9M6.6 9.6L4.4 12.4" fill="none" stroke="#8f7d05" stroke-width="0.5"/><path d="M0.6 13.2L15.6 1.8" stroke="#d81a20" stroke-width="1.1"/></svg>
<svg style="left:550.6px;top:53.6px" width="15.0" height="15.0" viewBox="0 0 16 16"><path d="M1.4 7.4L5.2 2.2L13.9 3.7L13.9 13.7L2.7 13.1Z" fill="#e6d21e"/><path d="M1.4 7.4L5.2 2.2L13.9 3.7L6.2 6.7Z" fill="#f7ee6a"/><path d="M6.2 6.7L13.9 3.7L13.9 13.7L6.5 13.3Z" fill="#8f7d05" opacity="0.35"/><path d="M1.4 7.4L5.2 2.2L13.9 3.7L13.9 13.7L2.7 13.1Z" fill="none" stroke="#d81a20" stroke-width="1.1" stroke-linejoin="round"/><path d="M1.4 7.4L6.2 6.7L6.5 13.3L2.7 13.1Z" fill="#e6d21e" stroke="#d81a20" stroke-width="1.2" stroke-linejoin="round"/></svg>
<svg style="left:570.0px;top:53.6px" width="15.0" height="15.0" viewBox="0 0 16 16"><path d="M5.7 1.2L13.2 3.7L15.6 9.9L5.7 14.9L0.4 12.4L0.8 8.7C3 6.5 4.8 4 5.7 1.2Z" fill="#e6d21e" stroke="#8f7d05" stroke-width="0.6" stroke-linejoin="round"/><path d="M5.7 1.2L13.2 3.7C11.5 6 9 8.5 5.6 10C3.6 9.8 2 9.4 0.8 8.7C3 6.5 4.8 4 5.7 1.2Z" fill="#f7ee6a"/><path d="M5.6 10C9 8.5 11.5 6 13.2 3.7L15.6 9.9L5.7 14.9Z" fill="#8f7d05" opacity="0.3"/><path d="M5.7 1.2L13.2 3.7L15.6 9.9" fill="none" stroke="#d81a20" stroke-width="1"/><path d="M0.8 8.7L5.6 10L5.7 14.9L0.4 12.4Z" fill="#e6d21e" stroke="#d81a20" stroke-width="1.2" stroke-linejoin="round"/><circle cx="15" cy="1.5" r="1" fill="#5a0a10"/></svg>
<svg style="left:590.0px;top:53.6px" width="15.0" height="15.0" viewBox="0 0 16 16"><path d="M1.3 3L8.2 1.2L15.1 3V12.4L8.8 14.9L1.3 13Z" fill="#e6d21e" stroke="#8f7d05" stroke-width="0.6" stroke-linejoin="round"/><path d="M1.3 3L8.2 1.2L15.1 3L9.1 4.6Z" fill="#f7ee6a"/><path d="M9.1 4.6L15.1 3V12.4L8.8 14.9Z" fill="#8f7d05" opacity="0.3"/><path d="M1.3 3L9.1 4.6L15.1 3" fill="none" stroke="#8f7d05" stroke-width="0.5"/><path d="M9.1 4.6L8.8 14.9M1.3 13L8.8 14.9L15.1 12.4" fill="none" stroke="#d81a20" stroke-width="1.1"/><circle cx="9.1" cy="4.6" r="1.15" fill="#d81a20"/><circle cx="8.8" cy="14.8" r="1.15" fill="#d81a20"/><circle cx="1.4" cy="13" r="1.15" fill="#d81a20"/><circle cx="15" cy="12.4" r="1.15" fill="#d81a20"/></svg>
<svg style="left:621.2px;top:53.6px" width="15.0" height="15.0" viewBox="0 0 16 16"><path d="M0.8 7.8L7.4 1.6L14.6 3.4V7.4L7.6 14L0.9 11.4Z" fill="#3f74b8" stroke="#1d3f70" stroke-width="0.8" stroke-linejoin="round"/><path d="M0.8 7.8L7.4 1.6L14.6 3.4L8 9.8Z" fill="#6a9bd8"/><path d="M8 9.8V14L14.6 7.4V3.4Z" fill="#1d3f70" opacity="0.35"/><path d="M0.8 7.8L8 9.8L14.6 3.4M8 9.8V14" fill="none" stroke="#1d3f70" stroke-width="0.6"/><path d="M4.6 6.6L8 3.8L11.2 4.8L7.6 7.6Z" fill="#d81a20" stroke="#7c0a0a" stroke-width="0.5"/></svg>
<svg style="left:641.0px;top:53.6px" width="15.0" height="15.0" viewBox="0 0 16 16"><path d="M1 0.8L13 2.4L14.2 3.4V14.4L10.6 14L1 11.8Z" fill="#3f74b8" stroke="#1d3f70" stroke-width="0.8" stroke-linejoin="round"/><path d="M10.4 2.6V14L14.2 14.4V3.4Z" fill="#1d3f70" opacity="0.45"/><path d="M10.4 2.4V14" stroke="#1d3f70" stroke-width="0.6"/><ellipse cx="5.6" cy="6.6" rx="3.5" ry="4" fill="#d81a20" stroke="#7c0a0a" stroke-width="0.6"/><path d="M6.4 3.4C8.6 4.4 8.8 8.6 6.6 10.2C7.6 8 7.6 5.6 6.4 3.4Z" fill="#f6d0d0"/><path d="M3.6 4.2C2.4 5.6 2.4 8 3.8 9.6C5 8.6 5.2 5.6 3.6 4.2Z" fill="#9a0e14"/></svg>
<svg style="left:660.4px;top:53.6px" width="15.0" height="15.0" viewBox="0 0 16 16"><path d="M1 6L6.6 2.6L11.6 4L13.6 8.6L9.6 13L4.2 12.4C2 10.8 0.8 8.4 1 6Z" fill="#3f74b8" stroke="#1d3f70" stroke-width="0.8" stroke-linejoin="round"/><path d="M1 6L6.6 2.6C5 5 4.4 9 5.6 12.5L4.2 12.4C2 10.8 0.8 8.4 1 6Z" fill="#6a9bd8"/><path d="M7.6 1.6C10.6 1.2 13.4 3.6 14 7C14.4 9.6 13.4 11.6 11.8 12.6C12.4 10.6 12 8 10.8 5.8C10 4.2 8.8 2.6 7.6 1.6Z" fill="#d81a20" stroke="#7c0a0a" stroke-width="0.5"/><path d="M0.6 13.4L15 2" stroke="#d81a20" stroke-width="1.1"/></svg>
<svg style="left:680.4px;top:53.6px" width="15.0" height="15.0" viewBox="0 0 16 16"><path d="M1.4 7.4L5.2 2.2L13.9 3.7L13.9 13.7L2.7 13.1Z" fill="#d8161c"/><path d="M1.4 7.4L5.2 2.2L13.9 3.7L6.2 6.7Z" fill="#f05a5a"/><path d="M6.2 6.7L13.9 3.7L13.9 13.7L6.5 13.3Z" fill="#7c0a0a" opacity="0.35"/><path d="M1.4 7.4L5.2 2.2L13.9 3.7L13.9 13.7L2.7 13.1Z" fill="none" stroke="#3f74b8" stroke-width="1.1" stroke-linejoin="round"/><path d="M1.4 7.4L6.2 6.7L6.5 13.3L2.7 13.1Z" fill="#d81a20" stroke="#3f74b8" stroke-width="1.5" stroke-linejoin="round"/></svg>
<svg style="left:699.8px;top:53.6px" width="15.0" height="15.0" viewBox="0 0 16 16"><path d="M5.7 1.2L13.2 3.7L15.6 9.9L5.7 14.9L0.4 12.4L0.8 8.7C3 6.5 4.8 4 5.7 1.2Z" fill="#d8161c" stroke="#7c0a0a" stroke-width="0.6" stroke-linejoin="round"/><path d="M5.7 1.2L13.2 3.7C11.5 6 9 8.5 5.6 10C3.6 9.8 2 9.4 0.8 8.7C3 6.5 4.8 4 5.7 1.2Z" fill="#f05a5a"/><path d="M5.6 10C9 8.5 11.5 6 13.2 3.7L15.6 9.9L5.7 14.9Z" fill="#7c0a0a" opacity="0.3"/><path d="M5.7 1.2L13.2 3.7L15.6 9.9" fill="none" stroke="#3f74b8" stroke-width="1"/><path d="M0.8 8.7L5.6 10L5.7 14.9L0.4 12.4Z" fill="#d81a20" stroke="#3f74b8" stroke-width="1.5" stroke-linejoin="round"/><circle cx="15" cy="1.5" r="1" fill="#1d3f70"/></svg>
<svg style="left:719.6px;top:53.6px" width="15.0" height="15.0" viewBox="0 0 16 16"><path d="M1.3 3L8.2 1.2L15.1 3V12.4L8.8 14.9L1.3 13Z" fill="#d8161c" stroke="#7c0a0a" stroke-width="0.6" stroke-linejoin="round"/><path d="M1.3 3L8.2 1.2L15.1 3L9.1 4.6Z" fill="#f05a5a"/><path d="M9.1 4.6L15.1 3V12.4L8.8 14.9Z" fill="#7c0a0a" opacity="0.3"/><path d="M1.3 3L9.1 4.6L15.1 3" fill="none" stroke="#7c0a0a" stroke-width="0.5"/><path d="M9.1 4.6L8.8 14.9M1.3 13L8.8 14.9L15.1 12.4" fill="none" stroke="#3f74b8" stroke-width="1.1"/><circle cx="9.1" cy="4.6" r="1.15" fill="#3f74b8"/><circle cx="8.8" cy="14.8" r="1.15" fill="#3f74b8"/><circle cx="1.4" cy="13" r="1.15" fill="#3f74b8"/><circle cx="15" cy="12.4" r="1.15" fill="#3f74b8"/></svg>
<svg style="left:751.4px;top:53.6px" width="15.0" height="15.0" viewBox="0 0 16 16"><path d="M2 3L5 1.5L8 3V9L2 9.5Z" fill="#6a9bd8" stroke="#1d3f70" stroke-width="0.6"/><path d="M1 9L8 7L15 5V13L8 15.5L1 14Z" fill="#3f74b8" stroke="#1d3f70" stroke-width="0.8" stroke-linejoin="round"/><path d="M8.5 6.5C8.5 4.8 10 3.8 11.8 3.8C13.6 3.8 15 4.8 15 6.5V12.5C15 13.6 13.6 14.4 11.8 14.4C10 14.4 8.5 13.6 8.5 12.5Z" fill="#e6d21e" stroke="#8f7d05" stroke-width="0.7"/><ellipse cx="11.8" cy="6.5" rx="3.2" ry="2" fill="#f7ee6a" stroke="#8f7d05" stroke-width="0.5"/><circle cx="3.4" cy="12.3" r="1.2" fill="#d81a20"/></svg>
<svg style="left:770.8px;top:53.6px" width="15.0" height="15.0" viewBox="0 0 16 16"><path d="M0.8 8.6L4.4 6.4L8 7.6L14.9 2.2V13.2L7.4 15.5L0.8 13.8Z" fill="#3868ac" stroke="#1d3f70" stroke-width="0.8" stroke-linejoin="round"/><path d="M0.8 8.6L4.4 6.4L8 7.6L14.9 2.2V5.4L7.4 11Z" fill="#5f92d2" opacity="0.85"/><path d="M0.8 8.6L7.4 11L14.9 5.4M7.4 11V15.5" fill="none" stroke="#1d3f70" stroke-width="0.5"/><circle cx="6.6" cy="9" r="2" fill="#e6d21e" stroke="#8f7d05" stroke-width="0.5"/><circle cx="10" cy="7.6" r="2" fill="#e6d21e" stroke="#8f7d05" stroke-width="0.5"/><circle cx="12.8" cy="6" r="1.8" fill="#e6d21e" stroke="#8f7d05" stroke-width="0.5"/></svg>
<svg style="left:790.4px;top:53.6px" width="15.0" height="15.0" viewBox="0 0 16 16"><path d="M0.8 8.6L4.4 6.4L8 7.6L14.9 2.2V13.2L7.4 15.5L0.8 13.8Z" fill="#3868ac" stroke="#1d3f70" stroke-width="0.8" stroke-linejoin="round"/><path d="M0.8 8.6L4.4 6.4L8 7.6L14.9 2.2V5.4L7.4 11Z" fill="#5f92d2" opacity="0.85"/><path d="M0.8 8.6L7.4 11L14.9 5.4M7.4 11V15.5" fill="none" stroke="#1d3f70" stroke-width="0.5"/><circle cx="5" cy="10.5" r="1.7" fill="#e6d21e" stroke="#8f7d05" stroke-width="0.5"/><circle cx="7.5" cy="7.6" r="1.7" fill="#e6d21e" stroke="#8f7d05" stroke-width="0.5"/><circle cx="10.6" cy="6" r="1.7" fill="#e6d21e" stroke="#8f7d05" stroke-width="0.5"/><circle cx="12.6" cy="8.6" r="1.7" fill="#e6d21e" stroke="#8f7d05" stroke-width="0.5"/><circle cx="8.6" cy="11.6" r="1.7" fill="#e6d21e" stroke="#8f7d05" stroke-width="0.5"/><circle cx="11.6" cy="11.6" r="1.7" fill="#e6d21e" stroke="#8f7d05" stroke-width="0.5"/></svg>
<svg style="left:810.0px;top:53.6px" width="15.0" height="15.0" viewBox="0 0 16 16"><path d="M0.8 8.6L4.4 6.4L8 7.6L14.9 2.2V13.2L7.4 15.5L0.8 13.8Z" fill="#3868ac" stroke="#1d3f70" stroke-width="0.8" stroke-linejoin="round"/><path d="M0.8 8.6L4.4 6.4L8 7.6L14.9 2.2V5.4L7.4 11Z" fill="#5f92d2" opacity="0.85"/><path d="M0.8 8.6L7.4 11L14.9 5.4M7.4 11V15.5" fill="none" stroke="#1d3f70" stroke-width="0.5"/><circle cx="5.4" cy="11.4" r="2" fill="#e6d21e" stroke="#8f7d05" stroke-width="0.5"/><circle cx="8.2" cy="5.6" r="3" fill="#e6d21e" stroke="#8f7d05" stroke-width="0.5"/><circle cx="11.4" cy="11" r="2.8" fill="#e6d21e" stroke="#8f7d05" stroke-width="0.5"/><circle cx="12.4" cy="4.6" r="2.2" fill="#e6d21e" stroke="#8f7d05" stroke-width="0.5"/></svg>
<svg style="left:834.0px;top:53.6px" width="15.0" height="15.0" viewBox="0 0 16 16"><path d="M1 7.5C1 4.5 4 2.4 8.5 2.2L15 5.4V11L7.6 14.8L1 12.8Z" fill="#3f74b8" stroke="#1d3f70" stroke-width="0.8" stroke-linejoin="round"/><path d="M1 7.5C1 4.5 4 2.4 8.5 2.2L15 5.4C10.5 5.6 7.8 7 7.6 10Z" fill="#d81a20" stroke="#7c0a0a" stroke-width="0.6"/><path d="M7.6 10V14.8" stroke="#1d3f70" stroke-width="0.6"/></svg>
<svg style="left:853.6px;top:53.6px" width="15.0" height="15.0" viewBox="0 0 16 16"><path d="M1 9.5L6.5 2.4L15 5.4V11L7.6 14.8L1 12.8Z" fill="#3f74b8" stroke="#1d3f70" stroke-width="0.8" stroke-linejoin="round"/><path d="M1 9.5L6.5 2.4L15 5.4L7.6 11.4Z" fill="#d81a20" stroke="#7c0a0a" stroke-width="0.6"/><path d="M7.6 11.4V14.8" stroke="#1d3f70" stroke-width="0.6"/></svg>
<svg style="left:873.0px;top:53.6px" width="15.0" height="15.0" viewBox="0 0 16 16"><path d="M1.5 4.4L8 1.2L14.5 4.4V11.8L8 15.2L1.5 11.8Z" fill="#3f74b8" stroke="#1d3f70" stroke-width="1" stroke-linejoin="round"/><path d="M3.8 6.6L8 8.6L12.2 6.6V11.6L8 13.6L3.8 11.6Z" fill="#d81a20" stroke="#7c0a0a" stroke-width="0.5"/><path d="M1.5 4.4L8 7.4L14.5 4.4M8 7.4V15.2" stroke="#1d3f70" stroke-width="0.8" fill="none"/></svg>
<svg style="left:892.6px;top:53.6px" width="15.0" height="15.0" viewBox="0 0 16 16"><path d="M1.5 1.6L11.5 3.2L14.5 5.4V15L4.6 13.8L1.5 11.2Z" fill="#3f74b8" stroke="#1d3f70" stroke-width="0.9" stroke-linejoin="round"/><path d="M3.4 3.6L10.4 4.6V12L3.4 11Z" fill="#d81a20" stroke="#7c0a0a" stroke-width="0.5"/><path d="M7 4.2V11.4" stroke="#f05a5a" stroke-width="0.7"/></svg>
<svg style="left:916.4px;top:53.6px" width="15.0" height="15.0" viewBox="0 0 16 16"><circle cx="5.8" cy="9.6" r="4.8" fill="#3f74b8" stroke="#1d3f70" stroke-width="0.7"/><circle cx="10.4" cy="6.2" r="4.8" fill="#4d82c6" stroke="#1d3f70" stroke-width="0.7"/><ellipse cx="9" cy="4.6" rx="2.2" ry="1.6" fill="#6a9bd8" opacity="0.7"/></svg>
<div class="abs" style="left:86.8px;top:32px;width:1px;height:16px;background:#dadada"></div>
<div class="abs" style="left:149.9px;top:32px;width:1px;height:16px;background:#dadada"></div>
<div class="abs" style="left:208.9px;top:32px;width:1px;height:16px;background:#dadada"></div>
<div class="abs" style="left:231.6px;top:32px;width:1px;height:16px;background:#dadada"></div>
<div class="abs" style="left:254.0px;top:32px;width:1px;height:16px;background:#dadada"></div>
<div class="abs" style="left:353.8px;top:32px;width:1px;height:16px;background:#dadada"></div>
<div class="abs" style="left:74.9px;top:53px;width:1px;height:16px;background:#dadada"></div>
<div class="abs" style="left:98.2px;top:53px;width:1px;height:16px;background:#dadada"></div>
<div class="abs" style="left:161.0px;top:53px;width:1px;height:16px;background:#dadada"></div>
<div class="abs" style="left:223.9px;top:53px;width:1px;height:16px;background:#dadada"></div>
<div class="abs" style="left:246.5px;top:53px;width:1px;height:16px;background:#dadada"></div>
<div class="abs" style="left:292.8px;top:53px;width:1px;height:16px;background:#dadada"></div>
<div class="abs" style="left:381.0px;top:53px;width:1px;height:16px;background:#dadada"></div>
<div class="abs" style="left:502.0px;top:53px;width:1px;height:16px;background:#dadada"></div>
<div class="abs" style="left:616.4px;top:53px;width:1px;height:16px;background:#dadada"></div>
<div class="abs" style="left:747.1px;top:53px;width:1px;height:16px;background:#dadada"></div>
<div class="abs" style="left:829.5px;top:53px;width:1px;height:16px;background:#dadada"></div>
<div class="abs" style="left:911.5px;top:53px;width:1px;height:16px;background:#dadada"></div>
<div class="abs" style="left:2.5px;top:32px;width:1px;height:16px;background:repeating-linear-gradient(#c4c4c4 0 1px,transparent 1px 2px)"></div>
<div class="abs" style="left:257.2px;top:32px;width:1px;height:16px;background:repeating-linear-gradient(#c4c4c4 0 1px,transparent 1px 2px)"></div>
<div class="abs" style="left:357.0px;top:32px;width:1px;height:16px;background:repeating-linear-gradient(#c4c4c4 0 1px,transparent 1px 2px)"></div>
<div class="abs" style="left:2.5px;top:53px;width:1px;height:16px;background:repeating-linear-gradient(#c4c4c4 0 1px,transparent 1px 2px)"></div>
<div class="abs" style="left:250.3px;top:53px;width:1px;height:16px;background:repeating-linear-gradient(#c4c4c4 0 1px,transparent 1px 2px)"></div>
<div class="abs" style="left:296.9px;top:53px;width:1px;height:16px;background:repeating-linear-gradient(#c4c4c4 0 1px,transparent 1px 2px)"></div>
<div class="abs" style="left:505.2px;top:53px;width:1px;height:16px;background:repeating-linear-gradient(#c4c4c4 0 1px,transparent 1px 2px)"></div>
<svg style="left:173.1px;top:38.2px" width="5" height="3" viewBox="0 0 5 3"><path d="M0 0H5L2.5 3Z" fill="#555"/></svg>
<svg style="left:200.8px;top:38.2px" width="5" height="3" viewBox="0 0 5 3"><path d="M0 0H5L2.5 3Z" fill="#555"/></svg>
<svg style="left:66.9px;top:59.6px" width="5" height="3" viewBox="0 0 5 3"><path d="M0 0H5L2.5 3Z" fill="#222"/></svg>
<svg style="left:608.5px;top:59.6px" width="5" height="3" viewBox="0 0 5 3"><path d="M0 0H5L2.5 3Z" fill="#222"/></svg>
<svg style="left:738.5px;top:59.6px" width="5" height="3" viewBox="0 0 5 3"><path d="M0 0H5L2.5 3Z" fill="#222"/></svg>
<div class="abs" style="left:261.2px;top:34.2px;width:89.4px;height:11.4px;background:#e3e3e3;border:1px solid #b6b6b6;box-sizing:border-box"></div>
<svg style="left:264.2px;top:35.4px" width="9" height="9" viewBox="0 0 16 16"><path d="M1.5 4.5L7 1.5L14.5 3.5V12L8.5 15L1.5 12.5Z" fill="#2f5fa8" stroke="#1d3f70" stroke-width="0.9"/><path d="M1.5 4.5L7 1.5L14.5 3.5L8.5 6.6Z" fill="#6b9cd9"/><path d="M8.5 6.6V15L14.5 12V3.5Z" fill="#e4cf1c"/><path d="M3.4 7.4L6.6 8.6V12.4L3.4 11.2Z" fill="#e4cf1c"/></svg>
<svg style="left:343px;top:38.8px" width="4.6" height="2.8" viewBox="0 0 5 3"><path d="M0 0H5L2.5 3Z" fill="#222"/></svg>
<svg style="left:1.6px;top:1.8px" width="12.2" height="12.2" viewBox="0 0 16 16"><text x="-1.2" y="14.6" font-family="Liberation Sans, sans-serif" font-weight="bold" font-size="18.5" fill="#c81e1e">F</text><circle cx="9.8" cy="10.8" r="3.5" fill="#3b66b0"/><circle cx="9.8" cy="10.8" r="4.1" fill="none" stroke="#3b66b0" stroke-width="1.7" stroke-dasharray="1.7 1.52"/><circle cx="9.8" cy="10.8" r="1.3" fill="#fff"/></svg>
<svg style="left:940.0px;top:2.0px" width="12.0" height="11.0" viewBox="0 0 12 11"><path d="M1.5 5.5H7.5" stroke="#222" stroke-width="0.8"/></svg>
<svg style="left:970.0px;top:2.0px" width="12.0" height="11.0" viewBox="0 0 12 11"><path d="M1.5 3.5H6.5V8.5H1.5Z M3 3.5V2H8V7H6.5" fill="none" stroke="#222" stroke-width="0.8"/></svg>
<svg style="left:1001.0px;top:2.0px" width="12.0" height="11.0" viewBox="0 0 12 11"><path d="M1.5 2.2L8 8.7M8 2.2L1.5 8.7" stroke="#222" stroke-width="0.8"/></svg>
<svg style="left:175.6px;top:75.4px" width="6.0" height="6.0" viewBox="0 0 6 6"><path d="M0.6 2.2H4V5.4H0.6Z M1.6 2.2V0.8H5.2V3.8H4" fill="none" stroke="#222" stroke-width="0.8"/><path d="M0.6 2.4H4" stroke="#222" stroke-width="1.2"/></svg>
<svg style="left:184.6px;top:75.8px" width="6.0" height="6.0" viewBox="0 0 6 6"><path d="M0.8 0.8L4.8 4.8M4.8 0.8L0.8 4.8" stroke="#222" stroke-width="1"/></svg>
<svg style="left:3.7px;top:119.9px" width="6.0" height="4.0" viewBox="0 0 6 4"><path d="M0.6 0.7L3 3.3L5.4 0.7" fill="none" stroke="#3a3a3a" stroke-width="0.95"/></svg>
<svg style="left:15.0px;top:117.4px" width="9.4" height="9.8" viewBox="0 0 16 16"><path d="M1 1H12.5L15 3.5V15H1Z" fill="#f3f3f3" stroke="#a9a9a9" stroke-width="0.9"/><g transform="translate(2.2,3.6) scale(0.74)"><path d="M1.3 5.3 L4.8 7.2 L5.0 10.2 L8.3 12.0 L8.6 15.4 L1.6 12.6Z" fill="#3f74b8"/><path d="M7.1 0.6 L10.6 2.4 L4.8 7.2 L1.3 5.3Z" fill="#6b9cd9"/><path d="M5.0 10.2 L10.8 5.3 L13.8 7.0 L8.3 12.0Z" fill="#6b9cd9"/><path d="M4.8 7.2 L10.6 2.4 L10.8 5.3 L5.0 10.2Z" fill="#3466a8"/><path d="M8.3 12.0 L13.8 7.0 L13.9 10.6 L8.6 15.4Z" fill="#3466a8"/><path d="M7.1 0.6 L10.6 2.4 L10.8 5.3 L13.8 7.0 L13.9 10.6 L8.6 15.4 L1.6 12.6 L1.3 5.3Z M4.8 7.2L10.6 2.4M5 10.2L10.8 5.3M4.8 7.2L5 10.2L8.3 12L13.8 7M8.3 12L8.6 15.4M1.3 5.3L4.8 7.2" fill="none" stroke="#1d3f70" stroke-width="0.8" stroke-linejoin="round"/></g><circle cx="10.2" cy="5" r="2.6" fill="#d81a20"/></svg>
<svg style="left:16.0px;top:130.3px" width="4.4" height="6.6" viewBox="0 0 4 6"><path d="M0.7 0.6L3.3 3L0.7 5.4" fill="none" stroke="#8e8e8e" stroke-width="1"/></svg>
<svg style="left:25.2px;top:128.2px" width="9.6" height="9.6" viewBox="0 0 16 16"><path d="M1.3 5.3 L4.8 7.2 L5.0 10.2 L8.3 12.0 L8.6 15.4 L1.6 12.6Z" fill="#3f74b8"/><path d="M7.1 0.6 L10.6 2.4 L4.8 7.2 L1.3 5.3Z" fill="#6b9cd9"/><path d="M5.0 10.2 L10.8 5.3 L13.8 7.0 L8.3 12.0Z" fill="#6b9cd9"/><path d="M4.8 7.2 L10.6 2.4 L10.8 5.3 L5.0 10.2Z" fill="#3466a8"/><path d="M8.3 12.0 L13.8 7.0 L13.9 10.6 L8.6 15.4Z" fill="#3466a8"/><path d="M7.1 0.6 L10.6 2.4 L10.8 5.3 L13.8 7.0 L13.9 10.6 L8.6 15.4 L1.6 12.6 L1.3 5.3Z M4.8 7.2L10.6 2.4M5 10.2L10.8 5.3M4.8 7.2L5 10.2L8.3 12L13.8 7M8.3 12L8.6 15.4M1.3 5.3L4.8 7.2" fill="none" stroke="#1d3f70" stroke-width="0.8" stroke-linejoin="round"/></svg>
<svg style="left:16.0px;top:141.9px" width="4.4" height="6.6" viewBox="0 0 4 6"><path d="M0.7 0.6L3.3 3L0.7 5.4" fill="none" stroke="#8e8e8e" stroke-width="1"/></svg>
<svg style="left:25.2px;top:139.8px" width="9.6" height="9.6" viewBox="0 0 16 16"><path d="M1.3 5.3 L4.8 7.2 L5.0 10.2 L8.3 12.0 L8.6 15.4 L1.6 12.6Z" fill="#3f74b8"/><path d="M7.1 0.6 L10.6 2.4 L4.8 7.2 L1.3 5.3Z" fill="#6b9cd9"/><path d="M5.0 10.2 L10.8 5.3 L13.8 7.0 L8.3 12.0Z" fill="#6b9cd9"/><path d="M4.8 7.2 L10.6 2.4 L10.8 5.3 L5.0 10.2Z" fill="#3466a8"/><path d="M8.3 12.0 L13.8 7.0 L13.9 10.6 L8.6 15.4Z" fill="#3466a8"/><path d="M7.1 0.6 L10.6 2.4 L10.8 5.3 L13.8 7.0 L13.9 10.6 L8.6 15.4 L1.6 12.6 L1.3 5.3Z M4.8 7.2L10.6 2.4M5 10.2L10.8 5.3M4.8 7.2L5 10.2L8.3 12L13.8 7M8.3 12L8.6 15.4M1.3 5.3L4.8 7.2" fill="none" stroke="#1d3f70" stroke-width="0.8" stroke-linejoin="round"/></svg>
<svg style="left:16.0px;top:153.6px" width="4.4" height="6.6" viewBox="0 0 4 6"><path d="M0.7 0.6L3.3 3L0.7 5.4" fill="none" stroke="#8e8e8e" stroke-width="1"/></svg>
<svg style="left:25.2px;top:151.5px" width="9.6" height="9.6" viewBox="0 0 16 16"><path d="M1.3 5.3 L4.8 7.2 L5.0 10.2 L8.3 12.0 L8.6 15.4 L1.6 12.6Z" fill="#3f74b8"/><path d="M7.1 0.6 L10.6 2.4 L4.8 7.2 L1.3 5.3Z" fill="#6b9cd9"/><path d="M5.0 10.2 L10.8 5.3 L13.8 7.0 L8.3 12.0Z" fill="#6b9cd9"/><path d="M4.8 7.2 L10.6 2.4 L10.8 5.3 L5.0 10.2Z" fill="#3466a8"/><path d="M8.3 12.0 L13.8 7.0 L13.9 10.6 L8.6 15.4Z" fill="#3466a8"/><path d="M7.1 0.6 L10.6 2.4 L10.8 5.3 L13.8 7.0 L13.9 10.6 L8.6 15.4 L1.6 12.6 L1.3 5.3Z M4.8 7.2L10.6 2.4M5 10.2L10.8 5.3M4.8 7.2L5 10.2L8.3 12L13.8 7M8.3 12L8.6 15.4M1.3 5.3L4.8 7.2" fill="none" stroke="#1d3f70" stroke-width="0.8" stroke-linejoin="round"/></svg>
<svg style="left:16.0px;top:165.3px" width="4.4" height="6.6" viewBox="0 0 4 6"><path d="M0.7 0.6L3.3 3L0.7 5.4" fill="none" stroke="#8e8e8e" stroke-width="1"/></svg>
<svg style="left:25.2px;top:163.2px" width="9.6" height="9.6" viewBox="0 0 16 16"><path d="M1.3 5.3 L4.8 7.2 L5.0 10.2 L8.3 12.0 L8.6 15.4 L1.6 12.6Z" fill="#3f74b8"/><path d="M7.1 0.6 L10.6 2.4 L4.8 7.2 L1.3 5.3Z" fill="#6b9cd9"/><path d="M5.0 10.2 L10.8 5.3 L13.8 7.0 L8.3 12.0Z" fill="#6b9cd9"/><path d="M4.8 7.2 L10.6 2.4 L10.8 5.3 L5.0 10.2Z" fill="#3466a8"/><path d="M8.3 12.0 L13.8 7.0 L13.9 10.6 L8.6 15.4Z" fill="#3466a8"/><path d="M7.1 0.6 L10.6 2.4 L10.8 5.3 L13.8 7.0 L13.9 10.6 L8.6 15.4 L1.6 12.6 L1.3 5.3Z M4.8 7.2L10.6 2.4M5 10.2L10.8 5.3M4.8 7.2L5 10.2L8.3 12L13.8 7M8.3 12L8.6 15.4M1.3 5.3L4.8 7.2" fill="none" stroke="#1d3f70" stroke-width="0.8" stroke-linejoin="round"/></svg>
<svg style="left:14.9px;top:178.7px" width="6.0" height="4.0" viewBox="0 0 6 4"><path d="M0.6 0.7L3 3.3L5.4 0.7" fill="none" stroke="#3a3a3a" stroke-width="0.95"/></svg>
<svg style="left:25.2px;top:174.8px" width="9.6" height="9.6" viewBox="0 0 16 16"><path d="M1.3 5.3 L4.8 7.2 L5.0 10.2 L8.3 12.0 L8.6 15.4 L1.6 12.6Z" fill="#3f74b8"/><path d="M7.1 0.6 L10.6 2.4 L4.8 7.2 L1.3 5.3Z" fill="#6b9cd9"/><path d="M5.0 10.2 L10.8 5.3 L13.8 7.0 L8.3 12.0Z" fill="#6b9cd9"/><path d="M4.8 7.2 L10.6 2.4 L10.8 5.3 L5.0 10.2Z" fill="#3466a8"/><path d="M8.3 12.0 L13.8 7.0 L13.9 10.6 L8.6 15.4Z" fill="#3466a8"/><path d="M7.1 0.6 L10.6 2.4 L10.8 5.3 L13.8 7.0 L13.9 10.6 L8.6 15.4 L1.6 12.6 L1.3 5.3Z M4.8 7.2L10.6 2.4M5 10.2L10.8 5.3M4.8 7.2L5 10.2L8.3 12L13.8 7M8.3 12L8.6 15.4M1.3 5.3L4.8 7.2" fill="none" stroke="#1d3f70" stroke-width="0.8" stroke-linejoin="round"/></svg>
<svg style="left:26.4px;top:189.1px" width="4.4" height="6.6" viewBox="0 0 4 6"><path d="M0.7 0.6L3.3 3L0.7 5.4" fill="none" stroke="#8e8e8e" stroke-width="1"/></svg>
<svg style="left:35.8px;top:186.5px" width="9.8" height="9.8" viewBox="0 0 16 16"><path d="M7.2 0.6V9.8L1 15.4M7.2 9.8L15.6 9" fill="none" stroke="#868686" stroke-width="1.7"/></svg>
<svg style="left:26.4px;top:200.8px" width="4.4" height="6.6" viewBox="0 0 4 6"><path d="M0.7 0.6L3.3 3L0.7 5.4" fill="none" stroke="#8e8e8e" stroke-width="1"/></svg>
<svg style="left:35.3px;top:198.2px" width="10.2" height="10.2" viewBox="0 0 16 16"><path d="M1.6 12.2L7.6 9.8L14.4 11.8L8.4 14.8Z" fill="none" stroke="#6a6a6a" stroke-width="1.3" stroke-linejoin="round"/><path d="M1.5 4.6L7.5 2L14.5 4.2V8.8L8.2 11.6L1.5 9.2Z" fill="#8a8a8a" stroke="#5c5c5c" stroke-width="0.8"/><path d="M1.5 4.6L7.5 2L14.5 4.2L8.2 6.8Z" fill="#b4b4b4"/><path d="M8.2 6.8V11.6" stroke="#6c6c6c" stroke-width="0.6"/></svg>
<svg style="left:26.4px;top:212.4px" width="4.4" height="6.6" viewBox="0 0 4 6"><path d="M0.7 0.6L3.3 3L0.7 5.4" fill="none" stroke="#8e8e8e" stroke-width="1"/></svg>
<svg style="left:35.2px;top:210.1px" width="10.6" height="10.6" viewBox="0 0 16 16"><path d="M1.5 6.6L8.5 2.6L14.8 4.6V10L8 14L1.5 11.6Z" fill="#9a9a9a" stroke="#6c6c6c" stroke-width="0.8"/><path d="M1.5 6.6L8.5 2.6L14.8 4.6L8 8.4Z" fill="#bdbdbd"/><path d="M5 6.4L8.4 4.6L11.4 5.6L8 7.4Z" fill="#777"/></svg>
<svg style="left:26.4px;top:224.0px" width="4.4" height="6.6" viewBox="0 0 4 6"><path d="M0.7 0.6L3.3 3L0.7 5.4" fill="none" stroke="#8e8e8e" stroke-width="1"/></svg>
<svg style="left:35.3px;top:221.4px" width="10.2" height="10.2" viewBox="0 0 16 16"><path d="M1.6 12.2L7.6 9.8L14.4 11.8L8.4 14.8Z" fill="none" stroke="#6a6a6a" stroke-width="1.3" stroke-linejoin="round"/><path d="M1.5 4.6L7.5 2L14.5 4.2V8.8L8.2 11.6L1.5 9.2Z" fill="#8a8a8a" stroke="#5c5c5c" stroke-width="0.8"/><path d="M1.5 4.6L7.5 2L14.5 4.2L8.2 6.8Z" fill="#b4b4b4"/><path d="M8.2 6.8V11.6" stroke="#6c6c6c" stroke-width="0.6"/></svg>
<svg style="left:40.9px;top:221.4px" width="5.0" height="5.0" viewBox="0 0 10 10"><circle cx="5" cy="5" r="4.6" fill="#e01818"/><path d="M5 2V6M5 7.2V8.4" stroke="#fff" stroke-width="1.6"/></svg>
<svg style="left:26.4px;top:235.8px" width="4.4" height="6.6" viewBox="0 0 4 6"><path d="M0.7 0.6L3.3 3L0.7 5.4" fill="none" stroke="#8e8e8e" stroke-width="1"/></svg>
<svg style="left:35.3px;top:233.2px" width="10.2" height="10.2" viewBox="0 0 16 16"><path d="M1.6 12.2L7.6 9.8L14.4 11.8L8.4 14.8Z" fill="none" stroke="#6a6a6a" stroke-width="1.3" stroke-linejoin="round"/><path d="M1.5 4.6L7.5 2L14.5 4.2V8.8L8.2 11.6L1.5 9.2Z" fill="#8a8a8a" stroke="#5c5c5c" stroke-width="0.8"/><path d="M1.5 4.6L7.5 2L14.5 4.2L8.2 6.8Z" fill="#b4b4b4"/><path d="M8.2 6.8V11.6" stroke="#6c6c6c" stroke-width="0.6"/></svg>
<svg style="left:35.3px;top:244.9px" width="10.2" height="10.2" viewBox="0 0 16 16"><path d="M1.6 12.2L7.6 9.8L14.4 11.8L8.4 14.8Z" fill="none" stroke="#6a6a6a" stroke-width="1.3" stroke-linejoin="round"/><path d="M1.5 4.6L7.5 2L14.5 4.2V8.8L8.2 11.6L1.5 9.2Z" fill="#8a8a8a" stroke="#5c5c5c" stroke-width="0.8"/><path d="M1.5 4.6L7.5 2L14.5 4.2L8.2 6.8Z" fill="#b4b4b4"/><path d="M8.2 6.8V11.6" stroke="#6c6c6c" stroke-width="0.6"/></svg>
<svg style="left:35.3px;top:256.5px" width="10.2" height="10.2" viewBox="0 0 16 16"><path d="M1.6 12.2L7.6 9.8L14.4 11.8L8.4 14.8Z" fill="none" stroke="#6a6a6a" stroke-width="1.3" stroke-linejoin="round"/><path d="M1.5 4.6L7.5 2L14.5 4.2V8.8L8.2 11.6L1.5 9.2Z" fill="#8a8a8a" stroke="#5c5c5c" stroke-width="0.8"/><path d="M1.5 4.6L7.5 2L14.5 4.2L8.2 6.8Z" fill="#b4b4b4"/><path d="M8.2 6.8V11.6" stroke="#6c6c6c" stroke-width="0.6"/></svg>
<svg style="left:26.4px;top:270.8px" width="4.4" height="6.6" viewBox="0 0 4 6"><path d="M0.7 0.6L3.3 3L0.7 5.4" fill="none" stroke="#8e8e8e" stroke-width="1"/></svg>
<svg style="left:35.0px;top:268.5px" width="10.8" height="10.8" viewBox="0 0 16 16"><path d="M1.5 6.6L8.5 2.6L14.8 4.6V11L8 14.6L1.5 12.2Z" fill="#3f74b8" stroke="#1d3f70" stroke-width="0.8"/><path d="M1.5 6.6L8.5 2.6L14.8 4.6L8 8.4Z" fill="#6a9bd8"/><path d="M4.6 6.4L8.4 4.2L11.8 5.4L8 7.6Z" fill="#d81a20" stroke="#7c0a0a" stroke-width="0.4"/><circle cx="11.6" cy="12.4" r="3" fill="#fff"/><path d="M11.6 9.6L14.2 12.6H12.6V15.2H10.6V12.6H9Z" fill="#19c11e" stroke="#0c8a10" stroke-width="0.4"/></svg>
<div class="abs" style="left:2px;top:114.5px;width:177px;height:1px;background:#f1f1f1"></div>
<svg style="left:181.2px;top:103.6px" width="6.0" height="4.0" viewBox="0 0 6 4"><path d="M0.6 3.3L3 0.8L5.4 3.3" fill="none" stroke="#444" stroke-width="0.9"/></svg>
<svg style="left:181.2px;top:280.6px" width="6.0" height="4.0" viewBox="0 0 6 4"><path d="M0.6 0.7L3 3.2L5.4 0.7" fill="none" stroke="#444" stroke-width="0.9"/></svg>
<svg style="left:6.0px;top:364.3px" width="4.4" height="6.6" viewBox="0 0 4 6"><path d="M0.7 0.6L3.3 3L0.7 5.4" fill="none" stroke="#777" stroke-width="1"/></svg>
<svg style="left:202.6px;top:517.6px" width="10.6" height="10.6" viewBox="0 0 16 16"><text x="-1.2" y="14.6" font-family="Liberation Sans, sans-serif" font-weight="bold" font-size="18.5" fill="#c81e1e">F</text><circle cx="9.8" cy="10.8" r="3.5" fill="#3b66b0"/><circle cx="9.8" cy="10.8" r="4.1" fill="none" stroke="#3b66b0" stroke-width="1.7" stroke-dasharray="1.7 1.52"/><circle cx="9.8" cy="10.8" r="1.3" fill="#fff"/></svg>
<svg style="left:278.8px;top:519.7px" width="7.2" height="7.2" viewBox="0 0 7 7"><rect x="0.3" y="0.3" width="6.4" height="6.4" fill="#e0605a" stroke="#c9453f" stroke-width="0.6"/><path d="M2 2L5 5M5 2L2 5" stroke="#fff" stroke-width="1"/></svg>
<svg style="left:900.3px;top:536.0px" width="6.0" height="9.0" viewBox="0 0 5 8.6"><rect x="0.5" y="0.5" width="4" height="7.6" rx="1.8" fill="#fff" stroke="#222" stroke-width="0.8"/><path d="M2.5 0.8V3.4" stroke="#222" stroke-width="0.7"/></svg>
<svg style="left:929.8px;top:539.6px" width="4.4" height="2.6" viewBox="0 0 5 3"><path d="M0 0H5L2.5 3Z" fill="#222"/></svg>
<div class="abs" style="left:938.4px;top:532px;width:1px;height:15px;background:#dcdcdc"></div>
<span class="tx" style="left:14.6px;top:1.8px;font-size:8.8px;transform:scaleX(0.843);">FreeCAD 0.18</span>
<span class="tx" style="left:4.5px;top:16.0px;font-size:8.6px;transform:scaleX(0.876);">Fichier</span>
<span class="tx" style="left:36.2px;top:16.0px;font-size:8.6px;transform:scaleX(0.974);">Édition</span>
<span class="tx" style="left:70.5px;top:16.0px;font-size:8.6px;transform:scaleX(0.953);">Affichage</span>
<span class="tx" style="left:113.7px;top:16.0px;font-size:8.6px;transform:scaleX(0.910);">Outils</span>
<span class="tx" style="left:143.0px;top:16.0px;font-size:8.6px;transform:scaleX(0.921);">Macro</span>
<span class="tx" style="left:174.2px;top:16.0px;font-size:8.6px;transform:scaleX(0.897);">Part Design</span>
<span class="tx" style="left:223.7px;top:16.0px;font-size:8.6px;transform:scaleX(0.888);">Fenêtre</span>
<span class="tx" style="left:258.0px;top:16.0px;font-size:8.6px;transform:scaleX(1.006);">Aide</span>
<span class="tx" style="left:274.2px;top:34.5px;font-size:7.4px;transform:scaleX(0.901);">Part Design</span>
<span class="tx" style="left:1.8px;top:73.6px;font-size:7.6px;transform:scaleX(0.891);">Vue combinée</span>
<span class="tx" style="left:8.3px;top:86.5px;font-size:7.4px;transform:scaleX(0.891);">Modèle</span>
<span class="tx" style="left:45.9px;top:86.5px;font-size:7.4px;transform:scaleX(0.907);">Tâches</span>
<span class="tx" style="left:4.5px;top:102.6px;font-size:8.2px;transform:scaleX(0.997);">Étiquettes &amp; attributs</span>
<span class="tx" style="left:27.6px;top:116.8px;font-size:8.2px;transform:scaleX(0.970);font-weight:bold">Cerveau moteur</span>
<span class="tx" style="left:38.6px;top:128.8px;font-size:8.2px;transform:scaleX(0.975);">Body</span>
<span class="tx" style="left:38.6px;top:140.5px;font-size:8.2px;transform:scaleX(0.937);">Body001</span>
<span class="tx" style="left:38.6px;top:152.2px;font-size:8.2px;transform:scaleX(0.937);">Body002</span>
<span class="tx" style="left:38.6px;top:163.9px;font-size:8.2px;transform:scaleX(0.937);">Body003</span>
<span class="tx" style="left:38.6px;top:175.5px;font-size:8.2px;transform:scaleX(0.937);">Body004</span>
<span class="tx" style="left:49.1px;top:186.9px;font-size:8.2px;transform:scaleX(0.983);color:#8c8c8c">Origin004</span>
<span class="tx" style="left:49.1px;top:198.6px;font-size:8.2px;transform:scaleX(0.927);color:#8c8c8c">Pad011</span>
<span class="tx" style="left:49.1px;top:210.3px;font-size:8.2px;transform:scaleX(0.930);color:#8c8c8c">Pocket005</span>
<span class="tx" style="left:49.1px;top:221.9px;font-size:8.2px;transform:scaleX(0.907);color:#8c8c8c">Pad012</span>
<span class="tx" style="left:49.1px;top:233.6px;font-size:8.2px;transform:scaleX(0.907);color:#8c8c8c">Pad013</span>
<span class="tx" style="left:49.1px;top:245.3px;font-size:8.2px;transform:scaleX(0.907);color:#8c8c8c">Pad014</span>
<span class="tx" style="left:49.1px;top:256.9px;font-size:8.2px;transform:scaleX(0.907);color:#8c8c8c">Pad015</span>
<span class="tx" style="left:49.1px;top:268.6px;font-size:8.2px;transform:scaleX(0.930);">Pocket006</span>
<span class="tx" style="left:2.6px;top:288.8px;font-size:7.4px;transform:scaleX(0.929);color:#7c7c7c">Rechercher</span>
<span class="tx" style="left:5.8px;top:307.7px;font-size:8.2px;transform:scaleX(0.969);">Propriété</span>
<span class="tx" style="left:58.0px;top:307.7px;font-size:8.2px;transform:scaleX(0.976);">Valeur</span>
<span class="tx" style="left:14.9px;top:321.6px;font-size:8.2px;transform:scaleX(0.899);font-weight:bold;color:#fff">Base</span>
<span class="tx" style="left:14.9px;top:335.2px;font-size:8.2px;transform:scaleX(0.957);">Tip</span>
<span class="tx" style="left:57.8px;top:335.2px;font-size:8.2px;transform:scaleX(0.930);">Pocket006</span>
<span class="tx" style="left:14.9px;top:348.6px;font-size:8.2px;transform:scaleX(0.912);">Base Fea...</span>
<span class="tx" style="left:14.9px;top:362.0px;font-size:8.2px;transform:scaleX(0.956);">Placement</span>
<span class="tx" style="left:57.8px;top:362.0px;font-size:8.2px;transform:scaleX(0.930);">[(0,00 0,00 1,00); 0,00 °; (0,00 mm  ...</span>
<span class="tx" style="left:14.9px;top:375.4px;font-size:8.2px;transform:scaleX(0.938);">Label</span>
<span class="tx" style="left:57.8px;top:375.4px;font-size:8.2px;transform:scaleX(0.937);">Body004</span>
<span class="tx" style="left:14.9px;top:388.8px;font-size:8.2px;transform:scaleX(0.940);">Group</span>
<span class="tx" style="left:57.8px;top:388.8px;font-size:8.2px;transform:scaleX(0.922);">[Sketch018, Pad011, Sketch019, Po...</span>
<span class="tx" style="left:9.4px;top:518.1px;font-size:7.4px;transform:scaleX(0.908);">Vue</span>
<span class="tx" style="left:37.0px;top:518.1px;font-size:7.4px;transform:scaleX(0.882);">Données</span>
<span class="tx" style="left:3.6px;top:534.8px;font-size:8.2px;transform:scaleX(0.930);">Preselected: Pocket004 - Cerveau_moteur.Pocket004.Edge4 (7.47967, 33.2984, 2.8)</span>
<span class="tx" style="left:910.8px;top:535.2px;font-size:8.2px;transform:scaleX(0.983);">CAD</span>
<span class="tx" style="left:941.8px;top:535.2px;font-size:8.2px;transform:scaleX(0.932);">122,32 mm x 65,57 mm</span>
<span class="tx" style="left:216.0px;top:517.6px;font-size:7.4px;transform:scaleX(0.929);">Cerveau moteur : 1</span>
<span id="nav-bottom" style="position:absolute;left:956px;top:113px;white-space:pre;font-size:20.0px;line-height:normal;color:#101010;-webkit-text-stroke:0.5px #101010;transform-origin:0 0;transform:matrix3d(-0.382372,-0.0724477,0,0.00538931,-1.96283e-16,-0.768156,0,-6.33412e-18,0,0,1,0,25.3,20.1036,0,1)">Bottom</span>
</body></html>
